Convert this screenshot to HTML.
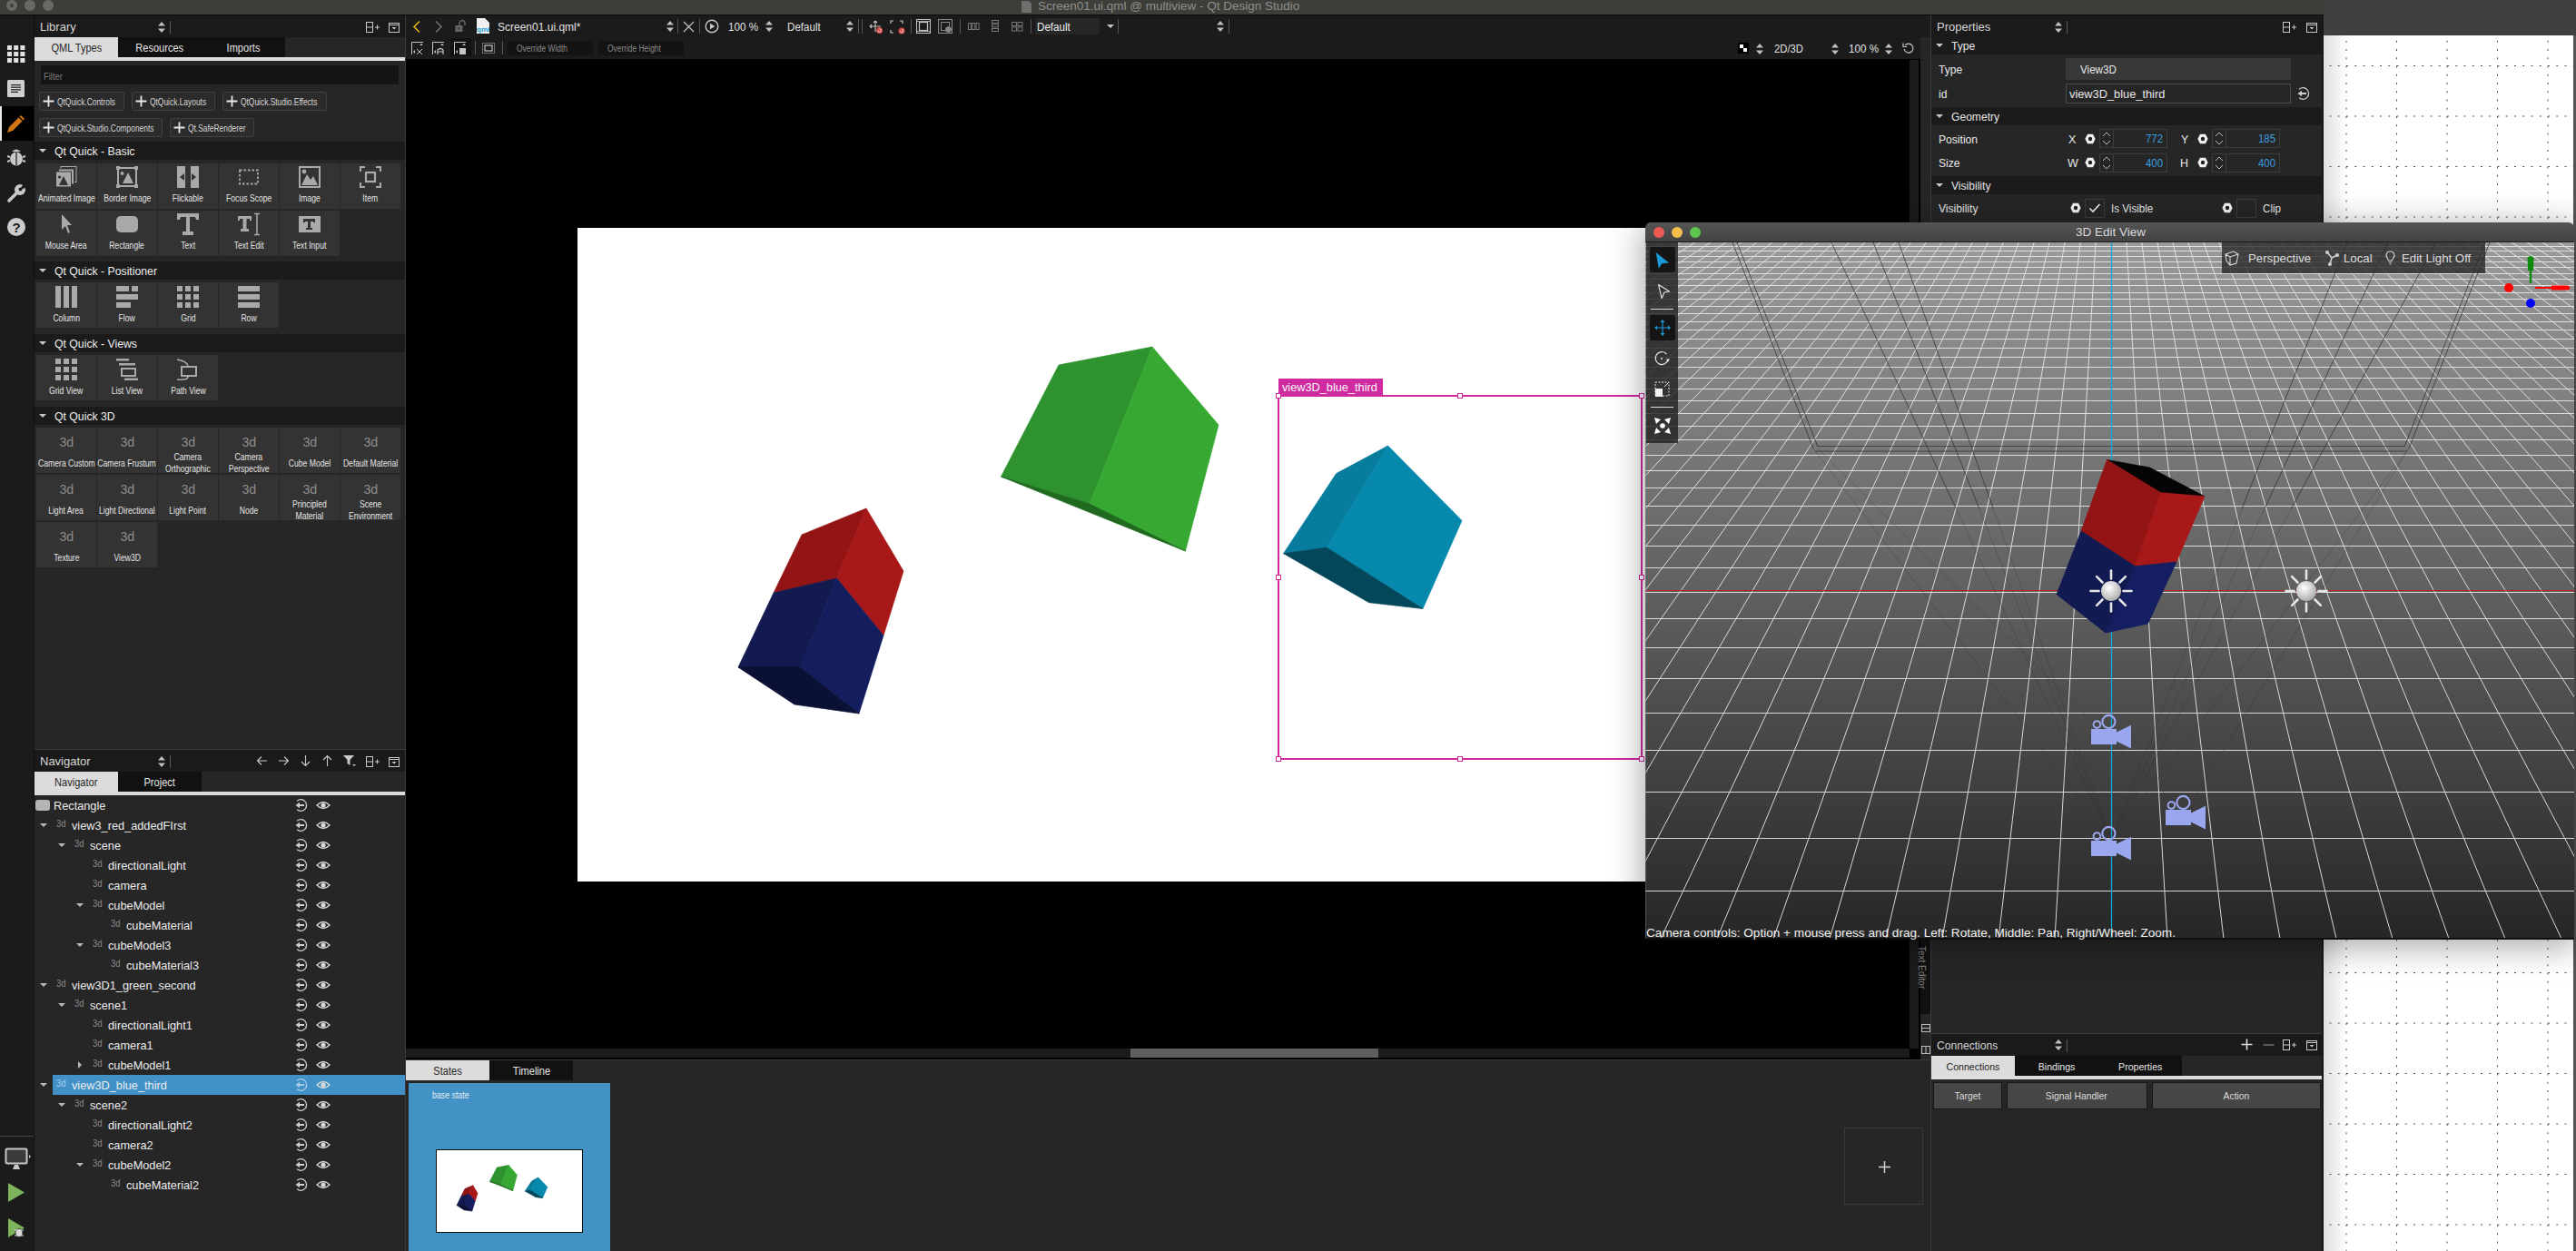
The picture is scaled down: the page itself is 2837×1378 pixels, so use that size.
<!DOCTYPE html>
<html><head><meta charset="utf-8">
<style>
html,body{margin:0;padding:0;width:2837px;height:1378px;overflow:hidden;background:#000;}
body{position:relative;font-family:"Liberation Sans",sans-serif;}
.a{position:absolute;}
.t{line-height:20px;height:20px;white-space:nowrap;}
svg{overflow:visible}
</style></head><body>

<div class="a" style="left:0px;top:0px;width:2559px;height:16px;background:#3d3e3a"></div>
<div class="a" style="left:0px;top:16px;width:2559px;height:1px;background:#0a0a0a"></div>
<div class="a" style="left:7px;top:0px;width:12px;height:12px;border-radius:6px;background:#686965"></div>
<div class="a" style="left:27px;top:0px;width:12px;height:12px;border-radius:6px;background:#686965"></div>
<div class="a" style="left:47px;top:0px;width:12px;height:12px;border-radius:6px;background:#686965"></div>
<div class="a" style="left:11px;top:4px;width:4px;height:4px;border-radius:2px;background:#3a3b38"></div>
<svg class="a" style="left:1125px;top:1px;" width="12" height="13" viewBox="0 0 12 13"><path d="M0 0H8L11 3V13H0Z" fill="#6e6f6c"/></svg>
<div class="a t" style="left:1143px;top:-3.23px;font-size:13.5px;color:#8e8f8b;font-weight:normal;">Screen01.ui.qml @ multiview - Qt Design Studio</div>
<div class="a" style="left:0px;top:17px;width:37px;height:1361px;background:#1b1b1b"></div>
<div class="a" style="left:37px;top:17px;width:1px;height:1361px;background:#111"></div>
<div class="a" style="left:0px;top:117px;width:37px;height:38px;background:#000"></div>
<div class="a" style="left:0px;top:117px;width:1.5px;height:38px;background:#e8e8e8"></div>
<svg class="a" style="left:8px;top:50px;" width="20" height="19" viewBox="0 0 20 19"><rect x="0.0" y="0" width="5" height="5" fill="#e2e2e2"/><rect x="0.0" y="7" width="5" height="5" fill="#e2e2e2"/><rect x="0.0" y="14" width="5" height="5" fill="#e2e2e2"/><rect x="7.2" y="0" width="5" height="5" fill="#e2e2e2"/><rect x="7.2" y="7" width="5" height="5" fill="#e2e2e2"/><rect x="7.2" y="14" width="5" height="5" fill="#e2e2e2"/><rect x="14.4" y="0" width="5" height="5" fill="#e2e2e2"/><rect x="14.4" y="7" width="5" height="5" fill="#e2e2e2"/><rect x="14.4" y="14" width="5" height="5" fill="#e2e2e2"/></svg>
<svg class="a" style="left:8px;top:88px;" width="20" height="20" viewBox="0 0 20 20"><rect x="0" y="0" width="19" height="19" rx="1.5" fill="#cfcfcf"/><rect x="4" y="5.0" width="11" height="1.2" fill="#222"/><rect x="4" y="7.6" width="11" height="1.2" fill="#222"/><rect x="4" y="10.2" width="11" height="1.2" fill="#222"/><rect x="4" y="12.8" width="8" height="1.2" fill="#222"/></svg>
<svg class="a" style="left:6px;top:125px;" width="24" height="24" viewBox="0 0 24 24"><path d="M2 21 L4 15 L17 2 L21 6 L8 19 Z" fill="#d07414"/><path d="M15 4 L19 8" stroke="#000" stroke-width="1.2"/></svg>
<svg class="a" style="left:7px;top:163px;" width="22" height="20" viewBox="0 0 22 20"><path d="M6 4 Q11 -1 16 4 Z" fill="#c8c8c8"/><ellipse cx="11" cy="12" rx="7" ry="7.5" fill="#c8c8c8"/><path d="M11 5 V19" stroke="#1b1b1b" stroke-width="1.2"/><path d="M1 9 L4 10 M1 15 L4 14 M21 9 L18 10 M21 15 L18 14" stroke="#c8c8c8" stroke-width="2"/></svg>
<svg class="a" style="left:7px;top:201px;" width="22" height="23" viewBox="0 0 22 23"><path d="M3 20 L13 10" stroke="#c8c8c8" stroke-width="3.6" stroke-linecap="round"/><circle cx="15" cy="8" r="6" fill="#c8c8c8"/><path d="M15 8 L19 1 L23 5 Z" fill="#1b1b1b"/><circle cx="15.5" cy="7.5" r="2" fill="#1b1b1b"/></svg>
<div class="a" style="left:8px;top:240px;width:20px;height:20px;border-radius:10px;background:#cbcbcb"></div>
<div class="a t" style="left:-982px;width:2000px;text-align:center;top:240.80px;font-size:15px;color:#1b1b1b;font-weight:bold;">?</div>
<div class="a" style="left:0px;top:1251px;width:37px;height:1px;background:#474747"></div>
<svg class="a" style="left:5px;top:1264px;" width="30" height="26" viewBox="0 0 30 26"><rect x="1.5" y="1.5" width="23" height="16" rx="1.5" fill="#3a3a3a" stroke="#c8c8c8" stroke-width="2"/><path d="M9 24 L17 24 L15 19 L11 19 Z" fill="#c8c8c8"/><path d="M27 8 L29 10 L27 12 Z" fill="#c8c8c8"/></svg>
<svg class="a" style="left:8px;top:1302px;" width="20" height="24" viewBox="0 0 20 24"><path d="M1 1 L19 11.5 L1 22 Z" fill="#7db35a"/></svg>
<svg class="a" style="left:8px;top:1341px;" width="22" height="24" viewBox="0 0 22 24"><path d="M1 1 L19 11.5 L1 22 Z" fill="#7db35a"/><ellipse cx="13" cy="17" rx="4" ry="4.5" fill="#d8d8d8" stroke="#1b1b1b" stroke-width="0.8"/><path d="M8 14 L18 14 M8 20 L18 20" stroke="#d8d8d8" stroke-width="1.2"/></svg>
<div class="a" style="left:2559px;top:0px;width:278px;height:39px;background:#404040"></div>
<div class="a" style="left:2559px;top:39px;width:278px;height:1339px;background:#fff"></div>
<div class="a" style="left:2834px;top:39px;width:3px;height:1339px;background:#555"></div>
<svg class="a" style="left:2559px;top:39px;" width="275" height="1339" viewBox="0 0 275 1339"><line x1="25.0" y1="0" x2="25.0" y2="1339" stroke="#505050" stroke-width="1" stroke-dasharray="2 7.25" stroke-dashoffset="3.5"/><line x1="80.5" y1="0" x2="80.5" y2="1339" stroke="#505050" stroke-width="1" stroke-dasharray="2 7.25" stroke-dashoffset="3.5"/><line x1="136.0" y1="0" x2="136.0" y2="1339" stroke="#505050" stroke-width="1" stroke-dasharray="2 7.25" stroke-dashoffset="3.5"/><line x1="191.5" y1="0" x2="191.5" y2="1339" stroke="#505050" stroke-width="1" stroke-dasharray="2 7.25" stroke-dashoffset="3.5"/><line x1="247.0" y1="0" x2="247.0" y2="1339" stroke="#505050" stroke-width="1" stroke-dasharray="2 7.25" stroke-dashoffset="3.5"/><line x1="0" y1="33.5" x2="275" y2="33.5" stroke="#505050" stroke-width="1" stroke-dasharray="2 7.25" stroke-dashoffset="2.75"/><line x1="0" y1="89.0" x2="275" y2="89.0" stroke="#505050" stroke-width="1" stroke-dasharray="2 7.25" stroke-dashoffset="2.75"/><line x1="0" y1="144.5" x2="275" y2="144.5" stroke="#505050" stroke-width="1" stroke-dasharray="2 7.25" stroke-dashoffset="2.75"/><line x1="0" y1="200.0" x2="275" y2="200.0" stroke="#505050" stroke-width="1" stroke-dasharray="2 7.25" stroke-dashoffset="2.75"/><line x1="0" y1="255.5" x2="275" y2="255.5" stroke="#505050" stroke-width="1" stroke-dasharray="2 7.25" stroke-dashoffset="2.75"/><line x1="0" y1="311.0" x2="275" y2="311.0" stroke="#505050" stroke-width="1" stroke-dasharray="2 7.25" stroke-dashoffset="2.75"/><line x1="0" y1="366.5" x2="275" y2="366.5" stroke="#505050" stroke-width="1" stroke-dasharray="2 7.25" stroke-dashoffset="2.75"/><line x1="0" y1="422.0" x2="275" y2="422.0" stroke="#505050" stroke-width="1" stroke-dasharray="2 7.25" stroke-dashoffset="2.75"/><line x1="0" y1="477.5" x2="275" y2="477.5" stroke="#505050" stroke-width="1" stroke-dasharray="2 7.25" stroke-dashoffset="2.75"/><line x1="0" y1="533.0" x2="275" y2="533.0" stroke="#505050" stroke-width="1" stroke-dasharray="2 7.25" stroke-dashoffset="2.75"/><line x1="0" y1="588.5" x2="275" y2="588.5" stroke="#505050" stroke-width="1" stroke-dasharray="2 7.25" stroke-dashoffset="2.75"/><line x1="0" y1="644.0" x2="275" y2="644.0" stroke="#505050" stroke-width="1" stroke-dasharray="2 7.25" stroke-dashoffset="2.75"/><line x1="0" y1="699.5" x2="275" y2="699.5" stroke="#505050" stroke-width="1" stroke-dasharray="2 7.25" stroke-dashoffset="2.75"/><line x1="0" y1="755.0" x2="275" y2="755.0" stroke="#505050" stroke-width="1" stroke-dasharray="2 7.25" stroke-dashoffset="2.75"/><line x1="0" y1="810.5" x2="275" y2="810.5" stroke="#505050" stroke-width="1" stroke-dasharray="2 7.25" stroke-dashoffset="2.75"/><line x1="0" y1="866.0" x2="275" y2="866.0" stroke="#505050" stroke-width="1" stroke-dasharray="2 7.25" stroke-dashoffset="2.75"/><line x1="0" y1="921.5" x2="275" y2="921.5" stroke="#505050" stroke-width="1" stroke-dasharray="2 7.25" stroke-dashoffset="2.75"/><line x1="0" y1="977.0" x2="275" y2="977.0" stroke="#505050" stroke-width="1" stroke-dasharray="2 7.25" stroke-dashoffset="2.75"/><line x1="0" y1="1032.5" x2="275" y2="1032.5" stroke="#505050" stroke-width="1" stroke-dasharray="2 7.25" stroke-dashoffset="2.75"/><line x1="0" y1="1088.0" x2="275" y2="1088.0" stroke="#505050" stroke-width="1" stroke-dasharray="2 7.25" stroke-dashoffset="2.75"/><line x1="0" y1="1143.5" x2="275" y2="1143.5" stroke="#505050" stroke-width="1" stroke-dasharray="2 7.25" stroke-dashoffset="2.75"/><line x1="0" y1="1199.0" x2="275" y2="1199.0" stroke="#505050" stroke-width="1" stroke-dasharray="2 7.25" stroke-dashoffset="2.75"/><line x1="0" y1="1254.5" x2="275" y2="1254.5" stroke="#505050" stroke-width="1" stroke-dasharray="2 7.25" stroke-dashoffset="2.75"/><line x1="0" y1="1310.0" x2="275" y2="1310.0" stroke="#505050" stroke-width="1" stroke-dasharray="2 7.25" stroke-dashoffset="2.75"/></svg>
<div class="a" style="left:2559px;top:39px;width:26px;height:1339px;background:linear-gradient(90deg,rgba(0,0,0,0.13),rgba(0,0,0,0))"></div>
<div class="a" style="left:38px;top:17px;width:408px;height:1361px;background:#262626"></div>
<div class="a" style="left:446px;top:17px;width:1px;height:1361px;background:#3b3b3b"></div>
<div class="a" style="left:38px;top:17px;width:408px;height:24px;background:#1a1a1a"></div>
<div class="a t" style="left:44px;top:20.26px;font-size:13px;color:#d6d6d6;font-weight:normal;">Library</div>
<svg class="a" style="left:173px;top:22.5px;" width="10" height="14" viewBox="0 0 10 14"><path d="M1 5.5 L5 1 L9 5.5 Z M1 8.5 L5 13 L9 8.5 Z" fill="#c0c0c0"/></svg>
<div class="a" style="left:187px;top:23px;width:1px;height:14px;background:#5a5a5a"></div>
<svg class="a" style="left:403px;top:24px;" width="16" height="12" viewBox="0 0 16 12"><rect x="0.5" y="0.5" width="7" height="11" fill="none" stroke="#c8c8c8" stroke-width="1"/><path d="M0.5 6 H7.5 M10 6 H15 M12.5 3.5 V8.5" stroke="#c8c8c8" stroke-width="1"/></svg>
<svg class="a" style="left:428px;top:25px;" width="12" height="11" viewBox="0 0 12 11"><rect x="0.5" y="0.5" width="11" height="10" fill="none" stroke="#c8c8c8" stroke-width="1"/><path d="M0.5 2.5 H11.5" stroke="#c8c8c8" stroke-width="1"/><path d="M3.5 5 L8.5 5 L6 7.5 Z" fill="#c8c8c8"/></svg>
<div class="a" style="left:38px;top:41px;width:408px;height:22px;background:#262626"></div>
<div class="a" style="left:38px;top:41px;width:92px;height:22px;background:#dcdcdc"></div>
<div class="a t" style="left:-916.0px;width:2000px;text-align:center;top:42.74px;font-size:12px;color:#262626;font-weight:normal;"><span style="display:inline-block;transform:scaleX(0.92);transform-origin:center center">QML Types</span></div>
<div class="a" style="left:130px;top:41px;width:92px;height:22px;background:#111111"></div>
<div class="a t" style="left:-824.0px;width:2000px;text-align:center;top:42.74px;font-size:12px;color:#e6e6e6;font-weight:normal;"><span style="display:inline-block;transform:scaleX(0.92);transform-origin:center center">Resources</span></div>
<div class="a" style="left:222px;top:41px;width:92px;height:22px;background:#111111"></div>
<div class="a t" style="left:-732.0px;width:2000px;text-align:center;top:42.74px;font-size:12px;color:#e6e6e6;font-weight:normal;"><span style="display:inline-block;transform:scaleX(0.92);transform-origin:center center">Imports</span></div>
<div class="a" style="left:38px;top:63px;width:408px;height:4px;background:#dcdcdc"></div>
<div class="a" style="left:45px;top:72px;width:394px;height:21px;background:#141414"></div>
<div class="a t" style="left:48px;top:73.71px;font-size:10.5px;color:#7a7a7a;font-weight:normal;"><span style="display:inline-block;transform:scaleX(0.9);transform-origin:left center">Filter</span></div>
<div class="a" style="left:43px;top:101px;width:94px;height:21px;background:#2b2b2b;border:1px solid #404040;box-sizing:border-box;border-radius:2px"></div>
<svg class="a" style="left:47px;top:105px;" width="13" height="13" viewBox="0 0 13 13"><path d="M6.5 0.5 V12.5 M0.5 6.5 H12.5" stroke="#e8e8e8" stroke-width="1.8"/></svg>
<div class="a t" style="left:63px;top:102.21px;font-size:10.5px;color:#d8d8d8;font-weight:normal;"><span style="display:inline-block;transform:scaleX(0.8);transform-origin:left center">QtQuick.Controls</span></div>
<div class="a" style="left:145px;top:101px;width:92px;height:21px;background:#2b2b2b;border:1px solid #404040;box-sizing:border-box;border-radius:2px"></div>
<svg class="a" style="left:149px;top:105px;" width="13" height="13" viewBox="0 0 13 13"><path d="M6.5 0.5 V12.5 M0.5 6.5 H12.5" stroke="#e8e8e8" stroke-width="1.8"/></svg>
<div class="a t" style="left:165px;top:102.21px;font-size:10.5px;color:#d8d8d8;font-weight:normal;"><span style="display:inline-block;transform:scaleX(0.8);transform-origin:left center">QtQuick.Layouts</span></div>
<div class="a" style="left:245px;top:101px;width:115px;height:21px;background:#2b2b2b;border:1px solid #404040;box-sizing:border-box;border-radius:2px"></div>
<svg class="a" style="left:249px;top:105px;" width="13" height="13" viewBox="0 0 13 13"><path d="M6.5 0.5 V12.5 M0.5 6.5 H12.5" stroke="#e8e8e8" stroke-width="1.8"/></svg>
<div class="a t" style="left:265px;top:102.21px;font-size:10.5px;color:#d8d8d8;font-weight:normal;"><span style="display:inline-block;transform:scaleX(0.8);transform-origin:left center">QtQuick.Studio.Effects</span></div>
<div class="a" style="left:43px;top:130px;width:136px;height:21px;background:#2b2b2b;border:1px solid #404040;box-sizing:border-box;border-radius:2px"></div>
<svg class="a" style="left:47px;top:134px;" width="13" height="13" viewBox="0 0 13 13"><path d="M6.5 0.5 V12.5 M0.5 6.5 H12.5" stroke="#e8e8e8" stroke-width="1.8"/></svg>
<div class="a t" style="left:63px;top:131.21px;font-size:10.5px;color:#d8d8d8;font-weight:normal;"><span style="display:inline-block;transform:scaleX(0.8);transform-origin:left center">QtQuick.Studio.Components</span></div>
<div class="a" style="left:187px;top:130px;width:93px;height:21px;background:#2b2b2b;border:1px solid #404040;box-sizing:border-box;border-radius:2px"></div>
<svg class="a" style="left:191px;top:134px;" width="13" height="13" viewBox="0 0 13 13"><path d="M6.5 0.5 V12.5 M0.5 6.5 H12.5" stroke="#e8e8e8" stroke-width="1.8"/></svg>
<div class="a t" style="left:207px;top:131.21px;font-size:10.5px;color:#d8d8d8;font-weight:normal;"><span style="display:inline-block;transform:scaleX(0.8);transform-origin:left center">Qt.SafeRenderer</span></div>
<div class="a" style="left:38px;top:156px;width:408px;height:20px;background:#1b1b1b"></div>
<svg class="a" style="left:42.5px;top:164.0px;" width="8" height="4" viewBox="0 0 8 4"><path d="M0 0 H8 L4 4 Z" fill="#c8c8c8"/></svg>
<div class="a t" style="left:60px;top:156.75px;font-size:12.5px;color:#eeeeee;font-weight:normal;"><span style="display:inline-block;transform:scaleX(0.98);transform-origin:left center">Qt Quick - Basic</span></div>
<div class="a" style="left:40px;top:179.5px;width:66px;height:50px;background:#333333"></div>
<svg class="a" style="left:61px;top:183.0px;" width="24" height="24" viewBox="0 0 24 24"><rect x="6" y="0.5" width="17" height="17" fill="none" stroke="#a9a9a9" stroke-width="1"/><rect x="3.5" y="3" width="17" height="17" fill="#a9a9a9" stroke="#333" stroke-width="1"/><rect x="0.5" y="6" width="17" height="17" fill="#a9a9a9" stroke="#333" stroke-width="1"/><path d="M4 21 L9 11 L14 21Z" fill="#333"/><circle cx="4.5" cy="12" r="1.6" fill="#333"/></svg>
<div class="a t" style="left:-927px;width:2000px;text-align:center;top:209.20px;font-size:10px;color:#e4e4e4;font-weight:normal;"><span style="display:inline-block;transform:scaleX(0.86);transform-origin:center center">Animated Image</span></div>
<div class="a" style="left:107px;top:179.5px;width:66px;height:50px;background:#333333"></div>
<svg class="a" style="left:128px;top:183.0px;" width="24" height="24" viewBox="0 0 24 24"><rect x="2" y="2" width="20" height="20" fill="none" stroke="#a9a9a9" stroke-width="2"/><rect x="0" y="0" width="4" height="4" fill="#a9a9a9"/><rect x="20" y="0" width="4" height="4" fill="#a9a9a9"/><rect x="0" y="20" width="4" height="4" fill="#a9a9a9"/><rect x="20" y="20" width="4" height="4" fill="#a9a9a9"/><path d="M7 19 L13 7 L19 19Z" fill="#a9a9a9"/><circle cx="6.5" cy="8" r="2" fill="#a9a9a9"/></svg>
<div class="a t" style="left:-860px;width:2000px;text-align:center;top:209.20px;font-size:10px;color:#e4e4e4;font-weight:normal;"><span style="display:inline-block;transform:scaleX(0.86);transform-origin:center center">Border Image</span></div>
<div class="a" style="left:174px;top:179.5px;width:66px;height:50px;background:#333333"></div>
<svg class="a" style="left:195px;top:183.0px;" width="24" height="24" viewBox="0 0 24 24"><rect x="0" y="0" width="9" height="24" fill="#a9a9a9"/><rect x="15" y="0" width="9" height="24" fill="#a9a9a9"/><path d="M8 8 L3 12 L8 16Z M16 8 L21 12 L16 16Z" fill="#333"/></svg>
<div class="a t" style="left:-793px;width:2000px;text-align:center;top:209.20px;font-size:10px;color:#e4e4e4;font-weight:normal;"><span style="display:inline-block;transform:scaleX(0.86);transform-origin:center center">Flickable</span></div>
<div class="a" style="left:241px;top:179.5px;width:66px;height:50px;background:#333333"></div>
<svg class="a" style="left:262px;top:183.0px;" width="24" height="24" viewBox="0 0 24 24"><rect x="2" y="4.5" width="20" height="15" fill="none" stroke="#a9a9a9" stroke-width="1.8" stroke-dasharray="2.5 2"/></svg>
<div class="a t" style="left:-726px;width:2000px;text-align:center;top:209.20px;font-size:10px;color:#e4e4e4;font-weight:normal;"><span style="display:inline-block;transform:scaleX(0.86);transform-origin:center center">Focus Scope</span></div>
<div class="a" style="left:308px;top:179.5px;width:66px;height:50px;background:#333333"></div>
<svg class="a" style="left:329px;top:183.0px;" width="24" height="24" viewBox="0 0 24 24"><rect x="1" y="1" width="22" height="22" fill="none" stroke="#a9a9a9" stroke-width="2"/><path d="M3 21 L9 9 L13 15 L16 11 L21 21Z" fill="#a9a9a9"/><circle cx="6" cy="6" r="2.4" fill="#a9a9a9"/></svg>
<div class="a t" style="left:-659px;width:2000px;text-align:center;top:209.20px;font-size:10px;color:#e4e4e4;font-weight:normal;"><span style="display:inline-block;transform:scaleX(0.86);transform-origin:center center">Image</span></div>
<div class="a" style="left:375px;top:179.5px;width:66px;height:50px;background:#333333"></div>
<svg class="a" style="left:396px;top:183.0px;" width="24" height="24" viewBox="0 0 24 24"><path d="M1 6 V1 H6 M18 1 H23 V6 M23 18 V23 H18 M6 23 H1 V18" fill="none" stroke="#a9a9a9" stroke-width="2"/><rect x="7" y="7" width="10" height="10" fill="none" stroke="#a9a9a9" stroke-width="2.2"/></svg>
<div class="a t" style="left:-592px;width:2000px;text-align:center;top:209.20px;font-size:10px;color:#e4e4e4;font-weight:normal;"><span style="display:inline-block;transform:scaleX(0.86);transform-origin:center center">Item</span></div>
<div class="a" style="left:40px;top:231.5px;width:66px;height:50px;background:#333333"></div>
<svg class="a" style="left:61px;top:235.0px;" width="24" height="24" viewBox="0 0 24 24"><path d="M2 0 L13 12 L8 12 L11 20 L9 21 L6 13 L2 17Z" fill="#a9a9a9" transform="translate(5,1)"/></svg>
<div class="a t" style="left:-927px;width:2000px;text-align:center;top:261.20px;font-size:10px;color:#e4e4e4;font-weight:normal;"><span style="display:inline-block;transform:scaleX(0.86);transform-origin:center center">Mouse Area</span></div>
<div class="a" style="left:107px;top:231.5px;width:66px;height:50px;background:#333333"></div>
<svg class="a" style="left:128px;top:235.0px;" width="24" height="24" viewBox="0 0 24 24"><rect x="0" y="3" width="24" height="18" rx="5" fill="#a9a9a9"/></svg>
<div class="a t" style="left:-860px;width:2000px;text-align:center;top:261.20px;font-size:10px;color:#e4e4e4;font-weight:normal;"><span style="display:inline-block;transform:scaleX(0.86);transform-origin:center center">Rectangle</span></div>
<div class="a" style="left:174px;top:231.5px;width:66px;height:50px;background:#333333"></div>
<svg class="a" style="left:195px;top:235.0px;" width="24" height="24" viewBox="0 0 24 24"><path d="M0 0 H24 V7 H21 L20 4 H14 V20 H18 V24 H6 V20 H10 V4 H4 L3 7 H0Z" fill="#a9a9a9"/></svg>
<div class="a t" style="left:-793px;width:2000px;text-align:center;top:261.20px;font-size:10px;color:#e4e4e4;font-weight:normal;"><span style="display:inline-block;transform:scaleX(0.86);transform-origin:center center">Text</span></div>
<div class="a" style="left:241px;top:231.5px;width:66px;height:50px;background:#333333"></div>
<svg class="a" style="left:262px;top:235.0px;" width="24" height="24" viewBox="0 0 24 24"><path d="M0 3 H15 V8 H13 V6 H9.5 V17 H12 V20 H3 V17 H5.5 V6 H2 V8 H0Z" fill="#a9a9a9"/><path d="M18 0.5 H24 M21 0.5 V23.5 M18 23.5 H24" stroke="#a9a9a9" stroke-width="1.5"/></svg>
<div class="a t" style="left:-726px;width:2000px;text-align:center;top:261.20px;font-size:10px;color:#e4e4e4;font-weight:normal;"><span style="display:inline-block;transform:scaleX(0.86);transform-origin:center center">Text Edit</span></div>
<div class="a" style="left:308px;top:231.5px;width:66px;height:50px;background:#333333"></div>
<svg class="a" style="left:329px;top:235.0px;" width="24" height="24" viewBox="0 0 24 24"><rect x="0" y="3" width="24" height="18" fill="#a9a9a9"/><path d="M5 6 H18 V10 H16 V9 H13 V16 H15 V18 H8 V16 H10 V9 H7 V10 H5Z" fill="#333"/></svg>
<div class="a t" style="left:-659px;width:2000px;text-align:center;top:261.20px;font-size:10px;color:#e4e4e4;font-weight:normal;"><span style="display:inline-block;transform:scaleX(0.86);transform-origin:center center">Text Input</span></div>
<div class="a" style="left:38px;top:288px;width:408px;height:20px;background:#1b1b1b"></div>
<svg class="a" style="left:42.5px;top:296.0px;" width="8" height="4" viewBox="0 0 8 4"><path d="M0 0 H8 L4 4 Z" fill="#c8c8c8"/></svg>
<div class="a t" style="left:60px;top:288.75px;font-size:12.5px;color:#eeeeee;font-weight:normal;"><span style="display:inline-block;transform:scaleX(0.98);transform-origin:left center">Qt Quick - Positioner</span></div>
<div class="a" style="left:40px;top:311px;width:66px;height:50px;background:#333333"></div>
<svg class="a" style="left:61px;top:314.5px;" width="24" height="24" viewBox="0 0 24 24"><rect x="0" y="0" width="6" height="24" fill="#a9a9a9"/><rect x="9" y="0" width="6" height="24" fill="#a9a9a9"/><rect x="18" y="0" width="6" height="24" fill="#a9a9a9"/></svg>
<div class="a t" style="left:-927px;width:2000px;text-align:center;top:340.70px;font-size:10px;color:#e4e4e4;font-weight:normal;"><span style="display:inline-block;transform:scaleX(0.86);transform-origin:center center">Column</span></div>
<div class="a" style="left:107px;top:311px;width:66px;height:50px;background:#333333"></div>
<svg class="a" style="left:128px;top:314.5px;" width="24" height="24" viewBox="0 0 24 24"><rect x="0" y="0" width="14" height="6" fill="#a9a9a9"/><rect x="17" y="0" width="7" height="6" fill="#a9a9a9"/><rect x="0" y="9" width="24" height="6" fill="#a9a9a9"/><rect x="0" y="18" width="16" height="6" fill="#a9a9a9"/></svg>
<div class="a t" style="left:-860px;width:2000px;text-align:center;top:340.70px;font-size:10px;color:#e4e4e4;font-weight:normal;"><span style="display:inline-block;transform:scaleX(0.86);transform-origin:center center">Flow</span></div>
<div class="a" style="left:174px;top:311px;width:66px;height:50px;background:#333333"></div>
<svg class="a" style="left:195px;top:314.5px;" width="24" height="24" viewBox="0 0 24 24"><rect x="0" y="0" width="6" height="6" fill="#a9a9a9"/><rect x="0" y="9" width="6" height="6" fill="#a9a9a9"/><rect x="0" y="18" width="6" height="6" fill="#a9a9a9"/><rect x="9" y="0" width="6" height="6" fill="#a9a9a9"/><rect x="9" y="9" width="6" height="6" fill="#a9a9a9"/><rect x="9" y="18" width="6" height="6" fill="#a9a9a9"/><rect x="18" y="0" width="6" height="6" fill="#a9a9a9"/><rect x="18" y="9" width="6" height="6" fill="#a9a9a9"/><rect x="18" y="18" width="6" height="6" fill="#a9a9a9"/></svg>
<div class="a t" style="left:-793px;width:2000px;text-align:center;top:340.70px;font-size:10px;color:#e4e4e4;font-weight:normal;"><span style="display:inline-block;transform:scaleX(0.86);transform-origin:center center">Grid</span></div>
<div class="a" style="left:241px;top:311px;width:66px;height:50px;background:#333333"></div>
<svg class="a" style="left:262px;top:314.5px;" width="24" height="24" viewBox="0 0 24 24"><rect x="0" y="0" width="24" height="6" fill="#a9a9a9"/><rect x="0" y="9" width="24" height="6" fill="#a9a9a9"/><rect x="0" y="18" width="24" height="6" fill="#a9a9a9"/></svg>
<div class="a t" style="left:-726px;width:2000px;text-align:center;top:340.70px;font-size:10px;color:#e4e4e4;font-weight:normal;"><span style="display:inline-block;transform:scaleX(0.86);transform-origin:center center">Row</span></div>
<div class="a" style="left:38px;top:368px;width:408px;height:20px;background:#1b1b1b"></div>
<svg class="a" style="left:42.5px;top:376.0px;" width="8" height="4" viewBox="0 0 8 4"><path d="M0 0 H8 L4 4 Z" fill="#c8c8c8"/></svg>
<div class="a t" style="left:60px;top:368.75px;font-size:12.5px;color:#eeeeee;font-weight:normal;"><span style="display:inline-block;transform:scaleX(0.98);transform-origin:left center">Qt Quick - Views</span></div>
<div class="a" style="left:40px;top:391px;width:66px;height:50px;background:#333333"></div>
<svg class="a" style="left:61px;top:394.5px;" width="24" height="24" viewBox="0 0 24 24"><rect x="0" y="0" width="6" height="6" fill="#a9a9a9"/><rect x="0" y="9" width="6" height="6" fill="#a9a9a9"/><rect x="0" y="18" width="6" height="6" fill="#a9a9a9"/><rect x="9" y="0" width="6" height="6" fill="#a9a9a9"/><rect x="9" y="9" width="6" height="6" fill="#a9a9a9"/><rect x="9" y="18" width="6" height="6" fill="#a9a9a9"/><rect x="18" y="0" width="6" height="6" fill="#a9a9a9"/><rect x="18" y="9" width="6" height="6" fill="#a9a9a9"/><rect x="18" y="18" width="6" height="6" fill="#a9a9a9"/></svg>
<div class="a t" style="left:-927px;width:2000px;text-align:center;top:420.70px;font-size:10px;color:#e4e4e4;font-weight:normal;"><span style="display:inline-block;transform:scaleX(0.86);transform-origin:center center">Grid View</span></div>
<div class="a" style="left:107px;top:391px;width:66px;height:50px;background:#333333"></div>
<svg class="a" style="left:128px;top:394.5px;" width="24" height="24" viewBox="0 0 24 24"><rect x="0" y="0" width="14" height="2.5" fill="#a9a9a9"/><rect x="3" y="5" width="18" height="2.5" fill="#a9a9a9"/><rect x="6" y="11" width="15" height="8" fill="none" stroke="#a9a9a9" stroke-width="2"/><rect x="9" y="21.5" width="15" height="2.5" fill="#a9a9a9"/></svg>
<div class="a t" style="left:-860px;width:2000px;text-align:center;top:420.70px;font-size:10px;color:#e4e4e4;font-weight:normal;"><span style="display:inline-block;transform:scaleX(0.86);transform-origin:center center">List View</span></div>
<div class="a" style="left:174px;top:391px;width:66px;height:50px;background:#333333"></div>
<svg class="a" style="left:195px;top:394.5px;" width="24" height="24" viewBox="0 0 24 24"><path d="M0 1 Q12 3 12 9 M12 20 Q12 24 0 23" fill="none" stroke="#a9a9a9" stroke-width="1.6"/><rect x="5" y="9" width="16" height="10" fill="none" stroke="#a9a9a9" stroke-width="2"/></svg>
<div class="a t" style="left:-793px;width:2000px;text-align:center;top:420.70px;font-size:10px;color:#e4e4e4;font-weight:normal;"><span style="display:inline-block;transform:scaleX(0.86);transform-origin:center center">Path View</span></div>
<div class="a" style="left:38px;top:448px;width:408px;height:20px;background:#1b1b1b"></div>
<svg class="a" style="left:42.5px;top:456.0px;" width="8" height="4" viewBox="0 0 8 4"><path d="M0 0 H8 L4 4 Z" fill="#c8c8c8"/></svg>
<div class="a t" style="left:60px;top:448.75px;font-size:12.5px;color:#eeeeee;font-weight:normal;"><span style="display:inline-block;transform:scaleX(0.98);transform-origin:left center">Qt Quick 3D</span></div>
<div class="a" style="left:40px;top:471px;width:66px;height:50px;background:#333333"></div>
<div class="a t" style="left:-927px;width:2000px;text-align:center;top:477.30px;font-size:15px;color:#8c8c8c;font-weight:normal;"><span style="display:inline-block;transform:scaleX(0.95);transform-origin:center center">3d</span></div>
<div class="a t" style="left:-927px;width:2000px;text-align:center;top:500.70px;font-size:10px;color:#e4e4e4;font-weight:normal;"><span style="display:inline-block;transform:scaleX(0.86);transform-origin:center center">Camera Custom</span></div>
<div class="a" style="left:107px;top:471px;width:66px;height:50px;background:#333333"></div>
<div class="a t" style="left:-860px;width:2000px;text-align:center;top:477.30px;font-size:15px;color:#8c8c8c;font-weight:normal;"><span style="display:inline-block;transform:scaleX(0.95);transform-origin:center center">3d</span></div>
<div class="a t" style="left:-860px;width:2000px;text-align:center;top:500.70px;font-size:10px;color:#e4e4e4;font-weight:normal;"><span style="display:inline-block;transform:scaleX(0.86);transform-origin:center center">Camera Frustum</span></div>
<div class="a" style="left:174px;top:471px;width:66px;height:50px;background:#333333"></div>
<div class="a t" style="left:-793px;width:2000px;text-align:center;top:477.30px;font-size:15px;color:#8c8c8c;font-weight:normal;"><span style="display:inline-block;transform:scaleX(0.95);transform-origin:center center">3d</span></div>
<div class="a t" style="left:-793px;width:2000px;text-align:center;top:493.70px;font-size:10px;color:#e4e4e4;font-weight:normal;"><span style="display:inline-block;transform:scaleX(0.86);transform-origin:center center">Camera</span></div>
<div class="a t" style="left:-793px;width:2000px;text-align:center;top:507.20px;font-size:10px;color:#e4e4e4;font-weight:normal;"><span style="display:inline-block;transform:scaleX(0.86);transform-origin:center center">Orthographic</span></div>
<div class="a" style="left:241px;top:471px;width:66px;height:50px;background:#333333"></div>
<div class="a t" style="left:-726px;width:2000px;text-align:center;top:477.30px;font-size:15px;color:#8c8c8c;font-weight:normal;"><span style="display:inline-block;transform:scaleX(0.95);transform-origin:center center">3d</span></div>
<div class="a t" style="left:-726px;width:2000px;text-align:center;top:493.70px;font-size:10px;color:#e4e4e4;font-weight:normal;"><span style="display:inline-block;transform:scaleX(0.86);transform-origin:center center">Camera</span></div>
<div class="a t" style="left:-726px;width:2000px;text-align:center;top:507.20px;font-size:10px;color:#e4e4e4;font-weight:normal;"><span style="display:inline-block;transform:scaleX(0.86);transform-origin:center center">Perspective</span></div>
<div class="a" style="left:308px;top:471px;width:66px;height:50px;background:#333333"></div>
<div class="a t" style="left:-659px;width:2000px;text-align:center;top:477.30px;font-size:15px;color:#8c8c8c;font-weight:normal;"><span style="display:inline-block;transform:scaleX(0.95);transform-origin:center center">3d</span></div>
<div class="a t" style="left:-659px;width:2000px;text-align:center;top:500.70px;font-size:10px;color:#e4e4e4;font-weight:normal;"><span style="display:inline-block;transform:scaleX(0.86);transform-origin:center center">Cube Model</span></div>
<div class="a" style="left:375px;top:471px;width:66px;height:50px;background:#333333"></div>
<div class="a t" style="left:-592px;width:2000px;text-align:center;top:477.30px;font-size:15px;color:#8c8c8c;font-weight:normal;"><span style="display:inline-block;transform:scaleX(0.95);transform-origin:center center">3d</span></div>
<div class="a t" style="left:-592px;width:2000px;text-align:center;top:500.70px;font-size:10px;color:#e4e4e4;font-weight:normal;"><span style="display:inline-block;transform:scaleX(0.86);transform-origin:center center">Default Material</span></div>
<div class="a" style="left:40px;top:523px;width:66px;height:50px;background:#333333"></div>
<div class="a t" style="left:-927px;width:2000px;text-align:center;top:529.30px;font-size:15px;color:#8c8c8c;font-weight:normal;"><span style="display:inline-block;transform:scaleX(0.95);transform-origin:center center">3d</span></div>
<div class="a t" style="left:-927px;width:2000px;text-align:center;top:552.70px;font-size:10px;color:#e4e4e4;font-weight:normal;"><span style="display:inline-block;transform:scaleX(0.86);transform-origin:center center">Light Area</span></div>
<div class="a" style="left:107px;top:523px;width:66px;height:50px;background:#333333"></div>
<div class="a t" style="left:-860px;width:2000px;text-align:center;top:529.30px;font-size:15px;color:#8c8c8c;font-weight:normal;"><span style="display:inline-block;transform:scaleX(0.95);transform-origin:center center">3d</span></div>
<div class="a t" style="left:-860px;width:2000px;text-align:center;top:552.70px;font-size:10px;color:#e4e4e4;font-weight:normal;"><span style="display:inline-block;transform:scaleX(0.86);transform-origin:center center">Light Directional</span></div>
<div class="a" style="left:174px;top:523px;width:66px;height:50px;background:#333333"></div>
<div class="a t" style="left:-793px;width:2000px;text-align:center;top:529.30px;font-size:15px;color:#8c8c8c;font-weight:normal;"><span style="display:inline-block;transform:scaleX(0.95);transform-origin:center center">3d</span></div>
<div class="a t" style="left:-793px;width:2000px;text-align:center;top:552.70px;font-size:10px;color:#e4e4e4;font-weight:normal;"><span style="display:inline-block;transform:scaleX(0.86);transform-origin:center center">Light Point</span></div>
<div class="a" style="left:241px;top:523px;width:66px;height:50px;background:#333333"></div>
<div class="a t" style="left:-726px;width:2000px;text-align:center;top:529.30px;font-size:15px;color:#8c8c8c;font-weight:normal;"><span style="display:inline-block;transform:scaleX(0.95);transform-origin:center center">3d</span></div>
<div class="a t" style="left:-726px;width:2000px;text-align:center;top:552.70px;font-size:10px;color:#e4e4e4;font-weight:normal;"><span style="display:inline-block;transform:scaleX(0.86);transform-origin:center center">Node</span></div>
<div class="a" style="left:308px;top:523px;width:66px;height:50px;background:#333333"></div>
<div class="a t" style="left:-659px;width:2000px;text-align:center;top:529.30px;font-size:15px;color:#8c8c8c;font-weight:normal;"><span style="display:inline-block;transform:scaleX(0.95);transform-origin:center center">3d</span></div>
<div class="a t" style="left:-659px;width:2000px;text-align:center;top:545.70px;font-size:10px;color:#e4e4e4;font-weight:normal;"><span style="display:inline-block;transform:scaleX(0.86);transform-origin:center center">Principled</span></div>
<div class="a t" style="left:-659px;width:2000px;text-align:center;top:559.20px;font-size:10px;color:#e4e4e4;font-weight:normal;"><span style="display:inline-block;transform:scaleX(0.86);transform-origin:center center">Material</span></div>
<div class="a" style="left:375px;top:523px;width:66px;height:50px;background:#333333"></div>
<div class="a t" style="left:-592px;width:2000px;text-align:center;top:529.30px;font-size:15px;color:#8c8c8c;font-weight:normal;"><span style="display:inline-block;transform:scaleX(0.95);transform-origin:center center">3d</span></div>
<div class="a t" style="left:-592px;width:2000px;text-align:center;top:545.70px;font-size:10px;color:#e4e4e4;font-weight:normal;"><span style="display:inline-block;transform:scaleX(0.86);transform-origin:center center">Scene</span></div>
<div class="a t" style="left:-592px;width:2000px;text-align:center;top:559.20px;font-size:10px;color:#e4e4e4;font-weight:normal;"><span style="display:inline-block;transform:scaleX(0.86);transform-origin:center center">Environment</span></div>
<div class="a" style="left:40px;top:575px;width:66px;height:50px;background:#333333"></div>
<div class="a t" style="left:-927px;width:2000px;text-align:center;top:581.30px;font-size:15px;color:#8c8c8c;font-weight:normal;"><span style="display:inline-block;transform:scaleX(0.95);transform-origin:center center">3d</span></div>
<div class="a t" style="left:-927px;width:2000px;text-align:center;top:604.70px;font-size:10px;color:#e4e4e4;font-weight:normal;"><span style="display:inline-block;transform:scaleX(0.86);transform-origin:center center">Texture</span></div>
<div class="a" style="left:107px;top:575px;width:66px;height:50px;background:#333333"></div>
<div class="a t" style="left:-860px;width:2000px;text-align:center;top:581.30px;font-size:15px;color:#8c8c8c;font-weight:normal;"><span style="display:inline-block;transform:scaleX(0.95);transform-origin:center center">3d</span></div>
<div class="a t" style="left:-860px;width:2000px;text-align:center;top:604.70px;font-size:10px;color:#e4e4e4;font-weight:normal;"><span style="display:inline-block;transform:scaleX(0.86);transform-origin:center center">View3D</span></div>
<div class="a" style="left:38px;top:825px;width:408px;height:1px;background:#3d3d3d"></div>
<div class="a" style="left:38px;top:826px;width:408px;height:24px;background:#1a1a1a"></div>
<div class="a t" style="left:44px;top:829.26px;font-size:13px;color:#d6d6d6;font-weight:normal;">Navigator</div>
<svg class="a" style="left:173px;top:831.5px;" width="10" height="14" viewBox="0 0 10 14"><path d="M1 5.5 L5 1 L9 5.5 Z M1 8.5 L5 13 L9 8.5 Z" fill="#c0c0c0"/></svg>
<div class="a" style="left:187px;top:832px;width:1px;height:14px;background:#5a5a5a"></div>
<svg class="a" style="left:282px;top:832px;" width="13" height="12" viewBox="0 0 13 12"><path d="M12 6 H1.5 M6 1.5 L1.5 6 L6 10.5" fill="none" stroke="#c8c8c8" stroke-width="1.1"/></svg>
<svg class="a" style="left:306px;top:832px;" width="13" height="12" viewBox="0 0 13 12"><path d="M1 6 H11.5 M7 1.5 L11.5 6 L7 10.5" fill="none" stroke="#c8c8c8" stroke-width="1.1"/></svg>
<svg class="a" style="left:330px;top:831px;" width="13" height="14" viewBox="0 0 13 14"><path d="M6.5 1 V12.5 M2 8 L6.5 12.5 L11 8" fill="none" stroke="#c8c8c8" stroke-width="1.1"/></svg>
<svg class="a" style="left:354px;top:831px;" width="13" height="14" viewBox="0 0 13 14"><path d="M6.5 13 V1.5 M2 6 L6.5 1.5 L11 6" fill="none" stroke="#c8c8c8" stroke-width="1.1"/></svg>
<svg class="a" style="left:378px;top:832px;" width="15" height="14" viewBox="0 0 15 14"><path d="M0 0 H12 L7.5 5 V11 L4.5 9 V5 Z" fill="#c8c8c8"/><path d="M10 10 H14 L12 12 Z" fill="#c8c8c8"/></svg>
<svg class="a" style="left:403px;top:833px;" width="16" height="12" viewBox="0 0 16 12"><rect x="0.5" y="0.5" width="7" height="11" fill="none" stroke="#c8c8c8" stroke-width="1"/><path d="M0.5 6 H7.5 M10 6 H15 M12.5 3.5 V8.5" stroke="#c8c8c8" stroke-width="1"/></svg>
<svg class="a" style="left:428px;top:834px;" width="12" height="11" viewBox="0 0 12 11"><rect x="0.5" y="0.5" width="11" height="10" fill="none" stroke="#c8c8c8" stroke-width="1"/><path d="M0.5 2.5 H11.5" stroke="#c8c8c8" stroke-width="1"/><path d="M3.5 5 L8.5 5 L6 7.5 Z" fill="#c8c8c8"/></svg>
<div class="a" style="left:38px;top:850px;width:408px;height:22px;background:#262626"></div>
<div class="a" style="left:38px;top:850px;width:92px;height:22px;background:#dcdcdc"></div>
<div class="a t" style="left:-916.0px;width:2000px;text-align:center;top:851.74px;font-size:12px;color:#262626;font-weight:normal;"><span style="display:inline-block;transform:scaleX(0.92);transform-origin:center center">Navigator</span></div>
<div class="a" style="left:130px;top:850px;width:92px;height:22px;background:#111111"></div>
<div class="a t" style="left:-824.0px;width:2000px;text-align:center;top:851.74px;font-size:12px;color:#e6e6e6;font-weight:normal;"><span style="display:inline-block;transform:scaleX(0.92);transform-origin:center center">Project</span></div>
<div class="a" style="left:38px;top:872px;width:408px;height:4px;background:#dcdcdc"></div>
<div class="a" style="left:39px;top:880.5px;width:16px;height:12px;background:#b4b4b4;border-radius:3px"></div>
<div class="a t" style="left:59px;top:877.76px;font-size:13px;color:#ececec;font-weight:normal;"><span style="display:inline-block;transform:scaleX(0.98);transform-origin:left center">Rectangle</span></div>
<svg class="a" style="left:322.5px;top:878.5px;" width="16" height="16" viewBox="0 0 16 16"><path d="M4.2 3.2 A6.3 6.3 0 1 1 4.2 12.8" fill="none" stroke="#d0d0d0" stroke-width="1.3"/><path d="M2.5 8 L7 4.8 V6.9 H12 V9.1 H7 V11.2 Z" fill="#d0d0d0"/></svg>
<svg class="a" style="left:348px;top:881.5px;" width="16" height="10" viewBox="0 0 16 10"><path d="M1 5 Q8 -2 15 5 Q8 12 1 5 Z" fill="none" stroke="#d8d8d8" stroke-width="1.3"/><circle cx="8" cy="5" r="2.6" fill="#d8d8d8"/></svg>
<div class="a t" style="left:62px;top:897.70px;font-size:10px;color:#8a8a8a;font-weight:normal;"><span style="display:inline-block;transform:scaleX(0.95);transform-origin:left center">3d</span></div>
<svg class="a" style="left:44px;top:907.0px;" width="8" height="4" viewBox="0 0 8 4"><path d="M0 0 H8 L4 4 Z" fill="#b8b8b8"/></svg>
<div class="a t" style="left:79px;top:899.76px;font-size:13px;color:#ececec;font-weight:normal;"><span style="display:inline-block;transform:scaleX(0.98);transform-origin:left center">view3_red_addedFIrst</span></div>
<svg class="a" style="left:322.5px;top:900.5px;" width="16" height="16" viewBox="0 0 16 16"><path d="M4.2 3.2 A6.3 6.3 0 1 1 4.2 12.8" fill="none" stroke="#d0d0d0" stroke-width="1.3"/><path d="M2.5 8 L7 4.8 V6.9 H12 V9.1 H7 V11.2 Z" fill="#d0d0d0"/></svg>
<svg class="a" style="left:348px;top:903.5px;" width="16" height="10" viewBox="0 0 16 10"><path d="M1 5 Q8 -2 15 5 Q8 12 1 5 Z" fill="none" stroke="#d8d8d8" stroke-width="1.3"/><circle cx="8" cy="5" r="2.6" fill="#d8d8d8"/></svg>
<div class="a t" style="left:82px;top:919.70px;font-size:10px;color:#8a8a8a;font-weight:normal;"><span style="display:inline-block;transform:scaleX(0.95);transform-origin:left center">3d</span></div>
<svg class="a" style="left:64px;top:929.0px;" width="8" height="4" viewBox="0 0 8 4"><path d="M0 0 H8 L4 4 Z" fill="#b8b8b8"/></svg>
<div class="a t" style="left:99px;top:921.76px;font-size:13px;color:#ececec;font-weight:normal;"><span style="display:inline-block;transform:scaleX(0.98);transform-origin:left center">scene</span></div>
<svg class="a" style="left:322.5px;top:922.5px;" width="16" height="16" viewBox="0 0 16 16"><path d="M4.2 3.2 A6.3 6.3 0 1 1 4.2 12.8" fill="none" stroke="#d0d0d0" stroke-width="1.3"/><path d="M2.5 8 L7 4.8 V6.9 H12 V9.1 H7 V11.2 Z" fill="#d0d0d0"/></svg>
<svg class="a" style="left:348px;top:925.5px;" width="16" height="10" viewBox="0 0 16 10"><path d="M1 5 Q8 -2 15 5 Q8 12 1 5 Z" fill="none" stroke="#d8d8d8" stroke-width="1.3"/><circle cx="8" cy="5" r="2.6" fill="#d8d8d8"/></svg>
<div class="a t" style="left:102px;top:941.70px;font-size:10px;color:#8a8a8a;font-weight:normal;"><span style="display:inline-block;transform:scaleX(0.95);transform-origin:left center">3d</span></div>
<div class="a t" style="left:119px;top:943.76px;font-size:13px;color:#ececec;font-weight:normal;"><span style="display:inline-block;transform:scaleX(0.98);transform-origin:left center">directionalLight</span></div>
<svg class="a" style="left:322.5px;top:944.5px;" width="16" height="16" viewBox="0 0 16 16"><path d="M4.2 3.2 A6.3 6.3 0 1 1 4.2 12.8" fill="none" stroke="#d0d0d0" stroke-width="1.3"/><path d="M2.5 8 L7 4.8 V6.9 H12 V9.1 H7 V11.2 Z" fill="#d0d0d0"/></svg>
<svg class="a" style="left:348px;top:947.5px;" width="16" height="10" viewBox="0 0 16 10"><path d="M1 5 Q8 -2 15 5 Q8 12 1 5 Z" fill="none" stroke="#d8d8d8" stroke-width="1.3"/><circle cx="8" cy="5" r="2.6" fill="#d8d8d8"/></svg>
<div class="a t" style="left:102px;top:963.70px;font-size:10px;color:#8a8a8a;font-weight:normal;"><span style="display:inline-block;transform:scaleX(0.95);transform-origin:left center">3d</span></div>
<div class="a t" style="left:119px;top:965.76px;font-size:13px;color:#ececec;font-weight:normal;"><span style="display:inline-block;transform:scaleX(0.98);transform-origin:left center">camera</span></div>
<svg class="a" style="left:322.5px;top:966.5px;" width="16" height="16" viewBox="0 0 16 16"><path d="M4.2 3.2 A6.3 6.3 0 1 1 4.2 12.8" fill="none" stroke="#d0d0d0" stroke-width="1.3"/><path d="M2.5 8 L7 4.8 V6.9 H12 V9.1 H7 V11.2 Z" fill="#d0d0d0"/></svg>
<svg class="a" style="left:348px;top:969.5px;" width="16" height="10" viewBox="0 0 16 10"><path d="M1 5 Q8 -2 15 5 Q8 12 1 5 Z" fill="none" stroke="#d8d8d8" stroke-width="1.3"/><circle cx="8" cy="5" r="2.6" fill="#d8d8d8"/></svg>
<div class="a t" style="left:102px;top:985.70px;font-size:10px;color:#8a8a8a;font-weight:normal;"><span style="display:inline-block;transform:scaleX(0.95);transform-origin:left center">3d</span></div>
<svg class="a" style="left:84px;top:995.0px;" width="8" height="4" viewBox="0 0 8 4"><path d="M0 0 H8 L4 4 Z" fill="#b8b8b8"/></svg>
<div class="a t" style="left:119px;top:987.76px;font-size:13px;color:#ececec;font-weight:normal;"><span style="display:inline-block;transform:scaleX(0.98);transform-origin:left center">cubeModel</span></div>
<svg class="a" style="left:322.5px;top:988.5px;" width="16" height="16" viewBox="0 0 16 16"><path d="M4.2 3.2 A6.3 6.3 0 1 1 4.2 12.8" fill="none" stroke="#d0d0d0" stroke-width="1.3"/><path d="M2.5 8 L7 4.8 V6.9 H12 V9.1 H7 V11.2 Z" fill="#d0d0d0"/></svg>
<svg class="a" style="left:348px;top:991.5px;" width="16" height="10" viewBox="0 0 16 10"><path d="M1 5 Q8 -2 15 5 Q8 12 1 5 Z" fill="none" stroke="#d8d8d8" stroke-width="1.3"/><circle cx="8" cy="5" r="2.6" fill="#d8d8d8"/></svg>
<div class="a t" style="left:122px;top:1007.70px;font-size:10px;color:#8a8a8a;font-weight:normal;"><span style="display:inline-block;transform:scaleX(0.95);transform-origin:left center">3d</span></div>
<div class="a t" style="left:139px;top:1009.76px;font-size:13px;color:#ececec;font-weight:normal;"><span style="display:inline-block;transform:scaleX(0.98);transform-origin:left center">cubeMaterial</span></div>
<svg class="a" style="left:322.5px;top:1010.5px;" width="16" height="16" viewBox="0 0 16 16"><path d="M4.2 3.2 A6.3 6.3 0 1 1 4.2 12.8" fill="none" stroke="#d0d0d0" stroke-width="1.3"/><path d="M2.5 8 L7 4.8 V6.9 H12 V9.1 H7 V11.2 Z" fill="#d0d0d0"/></svg>
<svg class="a" style="left:348px;top:1013.5px;" width="16" height="10" viewBox="0 0 16 10"><path d="M1 5 Q8 -2 15 5 Q8 12 1 5 Z" fill="none" stroke="#d8d8d8" stroke-width="1.3"/><circle cx="8" cy="5" r="2.6" fill="#d8d8d8"/></svg>
<div class="a t" style="left:102px;top:1029.70px;font-size:10px;color:#8a8a8a;font-weight:normal;"><span style="display:inline-block;transform:scaleX(0.95);transform-origin:left center">3d</span></div>
<svg class="a" style="left:84px;top:1039.0px;" width="8" height="4" viewBox="0 0 8 4"><path d="M0 0 H8 L4 4 Z" fill="#b8b8b8"/></svg>
<div class="a t" style="left:119px;top:1031.76px;font-size:13px;color:#ececec;font-weight:normal;"><span style="display:inline-block;transform:scaleX(0.98);transform-origin:left center">cubeModel3</span></div>
<svg class="a" style="left:322.5px;top:1032.5px;" width="16" height="16" viewBox="0 0 16 16"><path d="M4.2 3.2 A6.3 6.3 0 1 1 4.2 12.8" fill="none" stroke="#d0d0d0" stroke-width="1.3"/><path d="M2.5 8 L7 4.8 V6.9 H12 V9.1 H7 V11.2 Z" fill="#d0d0d0"/></svg>
<svg class="a" style="left:348px;top:1035.5px;" width="16" height="10" viewBox="0 0 16 10"><path d="M1 5 Q8 -2 15 5 Q8 12 1 5 Z" fill="none" stroke="#d8d8d8" stroke-width="1.3"/><circle cx="8" cy="5" r="2.6" fill="#d8d8d8"/></svg>
<div class="a t" style="left:122px;top:1051.70px;font-size:10px;color:#8a8a8a;font-weight:normal;"><span style="display:inline-block;transform:scaleX(0.95);transform-origin:left center">3d</span></div>
<div class="a t" style="left:139px;top:1053.76px;font-size:13px;color:#ececec;font-weight:normal;"><span style="display:inline-block;transform:scaleX(0.98);transform-origin:left center">cubeMaterial3</span></div>
<svg class="a" style="left:322.5px;top:1054.5px;" width="16" height="16" viewBox="0 0 16 16"><path d="M4.2 3.2 A6.3 6.3 0 1 1 4.2 12.8" fill="none" stroke="#d0d0d0" stroke-width="1.3"/><path d="M2.5 8 L7 4.8 V6.9 H12 V9.1 H7 V11.2 Z" fill="#d0d0d0"/></svg>
<svg class="a" style="left:348px;top:1057.5px;" width="16" height="10" viewBox="0 0 16 10"><path d="M1 5 Q8 -2 15 5 Q8 12 1 5 Z" fill="none" stroke="#d8d8d8" stroke-width="1.3"/><circle cx="8" cy="5" r="2.6" fill="#d8d8d8"/></svg>
<div class="a t" style="left:62px;top:1073.70px;font-size:10px;color:#8a8a8a;font-weight:normal;"><span style="display:inline-block;transform:scaleX(0.95);transform-origin:left center">3d</span></div>
<svg class="a" style="left:44px;top:1083.0px;" width="8" height="4" viewBox="0 0 8 4"><path d="M0 0 H8 L4 4 Z" fill="#b8b8b8"/></svg>
<div class="a t" style="left:79px;top:1075.76px;font-size:13px;color:#ececec;font-weight:normal;"><span style="display:inline-block;transform:scaleX(0.98);transform-origin:left center">view3D1_green_second</span></div>
<svg class="a" style="left:322.5px;top:1076.5px;" width="16" height="16" viewBox="0 0 16 16"><path d="M4.2 3.2 A6.3 6.3 0 1 1 4.2 12.8" fill="none" stroke="#d0d0d0" stroke-width="1.3"/><path d="M2.5 8 L7 4.8 V6.9 H12 V9.1 H7 V11.2 Z" fill="#d0d0d0"/></svg>
<svg class="a" style="left:348px;top:1079.5px;" width="16" height="10" viewBox="0 0 16 10"><path d="M1 5 Q8 -2 15 5 Q8 12 1 5 Z" fill="none" stroke="#d8d8d8" stroke-width="1.3"/><circle cx="8" cy="5" r="2.6" fill="#d8d8d8"/></svg>
<div class="a t" style="left:82px;top:1095.70px;font-size:10px;color:#8a8a8a;font-weight:normal;"><span style="display:inline-block;transform:scaleX(0.95);transform-origin:left center">3d</span></div>
<svg class="a" style="left:64px;top:1105.0px;" width="8" height="4" viewBox="0 0 8 4"><path d="M0 0 H8 L4 4 Z" fill="#b8b8b8"/></svg>
<div class="a t" style="left:99px;top:1097.76px;font-size:13px;color:#ececec;font-weight:normal;"><span style="display:inline-block;transform:scaleX(0.98);transform-origin:left center">scene1</span></div>
<svg class="a" style="left:322.5px;top:1098.5px;" width="16" height="16" viewBox="0 0 16 16"><path d="M4.2 3.2 A6.3 6.3 0 1 1 4.2 12.8" fill="none" stroke="#d0d0d0" stroke-width="1.3"/><path d="M2.5 8 L7 4.8 V6.9 H12 V9.1 H7 V11.2 Z" fill="#d0d0d0"/></svg>
<svg class="a" style="left:348px;top:1101.5px;" width="16" height="10" viewBox="0 0 16 10"><path d="M1 5 Q8 -2 15 5 Q8 12 1 5 Z" fill="none" stroke="#d8d8d8" stroke-width="1.3"/><circle cx="8" cy="5" r="2.6" fill="#d8d8d8"/></svg>
<div class="a t" style="left:102px;top:1117.70px;font-size:10px;color:#8a8a8a;font-weight:normal;"><span style="display:inline-block;transform:scaleX(0.95);transform-origin:left center">3d</span></div>
<div class="a t" style="left:119px;top:1119.76px;font-size:13px;color:#ececec;font-weight:normal;"><span style="display:inline-block;transform:scaleX(0.98);transform-origin:left center">directionalLight1</span></div>
<svg class="a" style="left:322.5px;top:1120.5px;" width="16" height="16" viewBox="0 0 16 16"><path d="M4.2 3.2 A6.3 6.3 0 1 1 4.2 12.8" fill="none" stroke="#d0d0d0" stroke-width="1.3"/><path d="M2.5 8 L7 4.8 V6.9 H12 V9.1 H7 V11.2 Z" fill="#d0d0d0"/></svg>
<svg class="a" style="left:348px;top:1123.5px;" width="16" height="10" viewBox="0 0 16 10"><path d="M1 5 Q8 -2 15 5 Q8 12 1 5 Z" fill="none" stroke="#d8d8d8" stroke-width="1.3"/><circle cx="8" cy="5" r="2.6" fill="#d8d8d8"/></svg>
<div class="a t" style="left:102px;top:1139.70px;font-size:10px;color:#8a8a8a;font-weight:normal;"><span style="display:inline-block;transform:scaleX(0.95);transform-origin:left center">3d</span></div>
<div class="a t" style="left:119px;top:1141.76px;font-size:13px;color:#ececec;font-weight:normal;"><span style="display:inline-block;transform:scaleX(0.98);transform-origin:left center">camera1</span></div>
<svg class="a" style="left:322.5px;top:1142.5px;" width="16" height="16" viewBox="0 0 16 16"><path d="M4.2 3.2 A6.3 6.3 0 1 1 4.2 12.8" fill="none" stroke="#d0d0d0" stroke-width="1.3"/><path d="M2.5 8 L7 4.8 V6.9 H12 V9.1 H7 V11.2 Z" fill="#d0d0d0"/></svg>
<svg class="a" style="left:348px;top:1145.5px;" width="16" height="10" viewBox="0 0 16 10"><path d="M1 5 Q8 -2 15 5 Q8 12 1 5 Z" fill="none" stroke="#d8d8d8" stroke-width="1.3"/><circle cx="8" cy="5" r="2.6" fill="#d8d8d8"/></svg>
<div class="a t" style="left:102px;top:1161.70px;font-size:10px;color:#8a8a8a;font-weight:normal;"><span style="display:inline-block;transform:scaleX(0.95);transform-origin:left center">3d</span></div>
<svg class="a" style="left:86.0px;top:1169px;" width="4" height="8" viewBox="0 0 4 8"><path d="M0 0 V8 L4 4 Z" fill="#b8b8b8"/></svg>
<div class="a t" style="left:119px;top:1163.76px;font-size:13px;color:#ececec;font-weight:normal;"><span style="display:inline-block;transform:scaleX(0.98);transform-origin:left center">cubeModel1</span></div>
<svg class="a" style="left:322.5px;top:1164.5px;" width="16" height="16" viewBox="0 0 16 16"><path d="M4.2 3.2 A6.3 6.3 0 1 1 4.2 12.8" fill="none" stroke="#d0d0d0" stroke-width="1.3"/><path d="M2.5 8 L7 4.8 V6.9 H12 V9.1 H7 V11.2 Z" fill="#d0d0d0"/></svg>
<svg class="a" style="left:348px;top:1167.5px;" width="16" height="10" viewBox="0 0 16 10"><path d="M1 5 Q8 -2 15 5 Q8 12 1 5 Z" fill="none" stroke="#d8d8d8" stroke-width="1.3"/><circle cx="8" cy="5" r="2.6" fill="#d8d8d8"/></svg>
<div class="a" style="left:58px;top:1184px;width:388px;height:22px;background:#4191c7"></div>
<div class="a t" style="left:62px;top:1183.70px;font-size:10px;color:#a8cce6;font-weight:normal;"><span style="display:inline-block;transform:scaleX(0.95);transform-origin:left center">3d</span></div>
<svg class="a" style="left:44px;top:1193.0px;" width="8" height="4" viewBox="0 0 8 4"><path d="M0 0 H8 L4 4 Z" fill="#b8b8b8"/></svg>
<div class="a t" style="left:79px;top:1185.76px;font-size:13px;color:#ececec;font-weight:normal;"><span style="display:inline-block;transform:scaleX(0.98);transform-origin:left center">view3D_blue_third</span></div>
<svg class="a" style="left:322.5px;top:1186.5px;" width="16" height="16" viewBox="0 0 16 16"><path d="M4.2 3.2 A6.3 6.3 0 1 1 4.2 12.8" fill="none" stroke="#a9cde8" stroke-width="1.3"/><path d="M2.5 8 L7 4.8 V6.9 H12 V9.1 H7 V11.2 Z" fill="#a9cde8"/></svg>
<svg class="a" style="left:348px;top:1189.5px;" width="16" height="10" viewBox="0 0 16 10"><path d="M1 5 Q8 -2 15 5 Q8 12 1 5 Z" fill="none" stroke="#d8d8d8" stroke-width="1.3"/><circle cx="8" cy="5" r="2.6" fill="#d8d8d8"/></svg>
<div class="a t" style="left:82px;top:1205.70px;font-size:10px;color:#8a8a8a;font-weight:normal;"><span style="display:inline-block;transform:scaleX(0.95);transform-origin:left center">3d</span></div>
<svg class="a" style="left:64px;top:1215.0px;" width="8" height="4" viewBox="0 0 8 4"><path d="M0 0 H8 L4 4 Z" fill="#b8b8b8"/></svg>
<div class="a t" style="left:99px;top:1207.76px;font-size:13px;color:#ececec;font-weight:normal;"><span style="display:inline-block;transform:scaleX(0.98);transform-origin:left center">scene2</span></div>
<svg class="a" style="left:322.5px;top:1208.5px;" width="16" height="16" viewBox="0 0 16 16"><path d="M4.2 3.2 A6.3 6.3 0 1 1 4.2 12.8" fill="none" stroke="#d0d0d0" stroke-width="1.3"/><path d="M2.5 8 L7 4.8 V6.9 H12 V9.1 H7 V11.2 Z" fill="#d0d0d0"/></svg>
<svg class="a" style="left:348px;top:1211.5px;" width="16" height="10" viewBox="0 0 16 10"><path d="M1 5 Q8 -2 15 5 Q8 12 1 5 Z" fill="none" stroke="#d8d8d8" stroke-width="1.3"/><circle cx="8" cy="5" r="2.6" fill="#d8d8d8"/></svg>
<div class="a t" style="left:102px;top:1227.70px;font-size:10px;color:#8a8a8a;font-weight:normal;"><span style="display:inline-block;transform:scaleX(0.95);transform-origin:left center">3d</span></div>
<div class="a t" style="left:119px;top:1229.76px;font-size:13px;color:#ececec;font-weight:normal;"><span style="display:inline-block;transform:scaleX(0.98);transform-origin:left center">directionalLight2</span></div>
<svg class="a" style="left:322.5px;top:1230.5px;" width="16" height="16" viewBox="0 0 16 16"><path d="M4.2 3.2 A6.3 6.3 0 1 1 4.2 12.8" fill="none" stroke="#d0d0d0" stroke-width="1.3"/><path d="M2.5 8 L7 4.8 V6.9 H12 V9.1 H7 V11.2 Z" fill="#d0d0d0"/></svg>
<svg class="a" style="left:348px;top:1233.5px;" width="16" height="10" viewBox="0 0 16 10"><path d="M1 5 Q8 -2 15 5 Q8 12 1 5 Z" fill="none" stroke="#d8d8d8" stroke-width="1.3"/><circle cx="8" cy="5" r="2.6" fill="#d8d8d8"/></svg>
<div class="a t" style="left:102px;top:1249.70px;font-size:10px;color:#8a8a8a;font-weight:normal;"><span style="display:inline-block;transform:scaleX(0.95);transform-origin:left center">3d</span></div>
<div class="a t" style="left:119px;top:1251.76px;font-size:13px;color:#ececec;font-weight:normal;"><span style="display:inline-block;transform:scaleX(0.98);transform-origin:left center">camera2</span></div>
<svg class="a" style="left:322.5px;top:1252.5px;" width="16" height="16" viewBox="0 0 16 16"><path d="M4.2 3.2 A6.3 6.3 0 1 1 4.2 12.8" fill="none" stroke="#d0d0d0" stroke-width="1.3"/><path d="M2.5 8 L7 4.8 V6.9 H12 V9.1 H7 V11.2 Z" fill="#d0d0d0"/></svg>
<svg class="a" style="left:348px;top:1255.5px;" width="16" height="10" viewBox="0 0 16 10"><path d="M1 5 Q8 -2 15 5 Q8 12 1 5 Z" fill="none" stroke="#d8d8d8" stroke-width="1.3"/><circle cx="8" cy="5" r="2.6" fill="#d8d8d8"/></svg>
<div class="a t" style="left:102px;top:1271.70px;font-size:10px;color:#8a8a8a;font-weight:normal;"><span style="display:inline-block;transform:scaleX(0.95);transform-origin:left center">3d</span></div>
<svg class="a" style="left:84px;top:1281.0px;" width="8" height="4" viewBox="0 0 8 4"><path d="M0 0 H8 L4 4 Z" fill="#b8b8b8"/></svg>
<div class="a t" style="left:119px;top:1273.76px;font-size:13px;color:#ececec;font-weight:normal;"><span style="display:inline-block;transform:scaleX(0.98);transform-origin:left center">cubeModel2</span></div>
<svg class="a" style="left:322.5px;top:1274.5px;" width="16" height="16" viewBox="0 0 16 16"><path d="M4.2 3.2 A6.3 6.3 0 1 1 4.2 12.8" fill="none" stroke="#d0d0d0" stroke-width="1.3"/><path d="M2.5 8 L7 4.8 V6.9 H12 V9.1 H7 V11.2 Z" fill="#d0d0d0"/></svg>
<svg class="a" style="left:348px;top:1277.5px;" width="16" height="10" viewBox="0 0 16 10"><path d="M1 5 Q8 -2 15 5 Q8 12 1 5 Z" fill="none" stroke="#d8d8d8" stroke-width="1.3"/><circle cx="8" cy="5" r="2.6" fill="#d8d8d8"/></svg>
<div class="a t" style="left:122px;top:1293.70px;font-size:10px;color:#8a8a8a;font-weight:normal;"><span style="display:inline-block;transform:scaleX(0.95);transform-origin:left center">3d</span></div>
<div class="a t" style="left:139px;top:1295.76px;font-size:13px;color:#ececec;font-weight:normal;"><span style="display:inline-block;transform:scaleX(0.98);transform-origin:left center">cubeMaterial2</span></div>
<svg class="a" style="left:322.5px;top:1296.5px;" width="16" height="16" viewBox="0 0 16 16"><path d="M4.2 3.2 A6.3 6.3 0 1 1 4.2 12.8" fill="none" stroke="#d0d0d0" stroke-width="1.3"/><path d="M2.5 8 L7 4.8 V6.9 H12 V9.1 H7 V11.2 Z" fill="#d0d0d0"/></svg>
<svg class="a" style="left:348px;top:1299.5px;" width="16" height="10" viewBox="0 0 16 10"><path d="M1 5 Q8 -2 15 5 Q8 12 1 5 Z" fill="none" stroke="#d8d8d8" stroke-width="1.3"/><circle cx="8" cy="5" r="2.6" fill="#d8d8d8"/></svg>
<div class="a" style="left:447px;top:17px;width:1680px;height:24px;background:#1b1b1b"></div>
<div class="a" style="left:447px;top:41px;width:1668px;height:24px;background:#1b1b1b"></div>
<div class="a" style="left:2115px;top:41px;width:11px;height:1127px;background:#262626"></div>
<div class="a" style="left:2126px;top:17px;width:1px;height:1361px;background:#3a3a3a"></div>
<div class="a" style="left:447px;top:65px;width:1668px;height:1103px;background:#000"></div>
<div class="a" style="left:2103px;top:66px;width:10px;height:1089px;background:#1b1b1b"></div>
<div class="a" style="left:447px;top:1155px;width:1656px;height:10px;background:#1b1b1b"></div>
<div class="a" style="left:1245px;top:1155px;width:273px;height:10px;background:#5e5e5e"></div>
<div class="a" style="left:447px;top:1167px;width:1680px;height:1px;background:#3a3a3a"></div>
<div class="a" style="left:2115px;top:1035px;width:11px;height:82px;background:#111"></div>
<div class="a t" style="left:2110px;top:1057px;width:50px;font-size:10px;color:#8a8a8a;transform:rotate(90deg);transform-origin:0 0;left:2126px;top:1042px;">Text Editor</div>
<svg class="a" style="left:2116px;top:1128px;" width="10" height="10" viewBox="0 0 10 10"><rect x="0.5" y="0.5" width="9" height="8" fill="none" stroke="#bbb"/><path d="M0.5 4.5 H9.5" stroke="#bbb"/></svg>
<svg class="a" style="left:2116px;top:1152px;" width="10" height="10" viewBox="0 0 10 10"><rect x="0.5" y="0.5" width="9" height="8" fill="none" stroke="#bbb"/><path d="M5 0.5 V8.5" stroke="#bbb"/></svg>
<svg class="a" style="left:454px;top:22px;" width="10" height="15" viewBox="0 0 10 15"><path d="M8 1.5 L2 7.5 L8 13.5" fill="none" stroke="#e3b41b" stroke-width="1.6"/></svg>
<svg class="a" style="left:478px;top:22px;" width="10" height="15" viewBox="0 0 10 15"><path d="M2 1.5 L8 7.5 L2 13.5" fill="none" stroke="#777" stroke-width="1.4"/></svg>
<svg class="a" style="left:501px;top:22px;" width="14" height="14" viewBox="0 0 14 14"><rect x="0.5" y="6" width="8" height="7" fill="#666"/><path d="M5 6 V3.5 A3 3 0 0 1 11 3.5 V6" fill="none" stroke="#666" stroke-width="1.4"/><rect x="3.5" y="8.5" width="2" height="2" fill="#333"/></svg>
<svg class="a" style="left:525px;top:20px;" width="15" height="18" viewBox="0 0 15 18"><path d="M0 0 H9 L14 5 V17 H0Z" fill="#f0f0f0"/><text x="0" y="15" font-size="8" fill="#1a9ad0" font-family="Liberation Sans" font-weight="bold">qml</text></svg>
<div class="a t" style="left:548px;top:19.75px;font-size:12.5px;color:#e2e2e2;font-weight:normal;"><span style="display:inline-block;transform:scaleX(0.96);transform-origin:left center">Screen01.ui.qml*</span></div>
<svg class="a" style="left:732.5px;top:22px;" width="10" height="14" viewBox="0 0 10 14"><path d="M1 5.5 L5 1 L9 5.5 Z M1 8.5 L5 13 L9 8.5 Z" fill="#c0c0c0"/></svg>
<div class="a" style="left:746px;top:21px;width:1px;height:16px;background:#555"></div>
<svg class="a" style="left:752px;top:23px;" width="13" height="13" viewBox="0 0 13 13"><path d="M1 1 L12 12 M12 1 L1 12" stroke="#bbb" stroke-width="1.3"/></svg>
<div class="a" style="left:770px;top:21px;width:1px;height:16px;background:#555"></div>
<svg class="a" style="left:776px;top:21px;" width="16" height="16" viewBox="0 0 16 16"><circle cx="8" cy="8" r="6.8" fill="none" stroke="#c8c8c8" stroke-width="1.4"/><path d="M6 4.8 L11.5 8 L6 11.2Z" fill="#c8c8c8"/></svg>
<div class="a t" style="left:801.5px;top:19.75px;font-size:12.5px;color:#e2e2e2;font-weight:normal;"><span style="display:inline-block;transform:scaleX(0.93);transform-origin:left center">100 %</span></div>
<svg class="a" style="left:841.5px;top:22px;" width="10" height="14" viewBox="0 0 10 14"><path d="M1 5.5 L5 1 L9 5.5 Z M1 8.5 L5 13 L9 8.5 Z" fill="#c0c0c0"/></svg>
<div class="a t" style="left:867px;top:19.75px;font-size:12.5px;color:#e2e2e2;font-weight:normal;"><span style="display:inline-block;transform:scaleX(0.93);transform-origin:left center">Default</span></div>
<svg class="a" style="left:931px;top:22px;" width="10" height="14" viewBox="0 0 10 14"><path d="M1 5.5 L5 1 L9 5.5 Z M1 8.5 L5 13 L9 8.5 Z" fill="#c0c0c0"/></svg>
<div class="a" style="left:945px;top:21px;width:1px;height:16px;background:#555"></div>
<div class="a" style="left:949px;top:21px;width:1px;height:16px;background:#555"></div>
<svg class="a" style="left:956px;top:22px;" width="18" height="16" viewBox="0 0 18 16"><path d="M8 1 V13 M2 7 H14 M8 1 L6 3 M8 1 L10 3 M2 7 L4 5 M2 7 L4 9" stroke="#c4c4c4" stroke-width="1.1" fill="none"/><circle cx="12.5" cy="11.5" r="3.5" fill="#d04a4a"/><path d="M10.8 11.5 A1.8 1.8 0 1 0 12.5 9.7" stroke="#f3c9c9" stroke-width="0.9" fill="none"/></svg>
<svg class="a" style="left:980px;top:22px;" width="18" height="16" viewBox="0 0 18 16"><path d="M1 4 V1 H4 M11 1 H14 V4 M14 11 V14 H11 M4 14 H1 V11" stroke="#c4c4c4" stroke-width="1.2" fill="none"/><circle cx="13" cy="12" r="3.5" fill="#d04a4a"/><path d="M11.3 12 A1.8 1.8 0 1 0 13 10.2" stroke="#f3c9c9" stroke-width="0.9" fill="none"/></svg>
<div class="a" style="left:1003px;top:21px;width:1px;height:16px;background:#555"></div>
<svg class="a" style="left:1009px;top:21px;" width="16" height="16" viewBox="0 0 16 16"><rect x="0.5" y="0.5" width="15" height="15" fill="none" stroke="#c4c4c4" stroke-width="1"/><rect x="3.5" y="3.5" width="9" height="9" fill="none" stroke="#c4c4c4" stroke-width="1.2"/><path d="M0.5 2.5 H15.5 M0.5 13.5 H15.5" stroke="#c4c4c4" stroke-width="0.8"/></svg>
<svg class="a" style="left:1033px;top:21px;" width="16" height="16" viewBox="0 0 16 16"><rect x="0.5" y="0.5" width="15" height="15" fill="none" stroke="#888" stroke-width="1"/><rect x="3.5" y="3.5" width="9" height="9" fill="none" stroke="#888" stroke-width="1"/><circle cx="11.5" cy="11.5" r="3.3" fill="#888"/></svg>
<div class="a" style="left:1057px;top:21px;width:1px;height:16px;background:#555"></div>
<svg class="a" style="left:1066px;top:25px;" width="13" height="8" viewBox="0 0 13 8"><rect x="0.5" y="0.5" width="3" height="7" fill="none" stroke="#777"/><rect x="4.8" y="0.5" width="3" height="7" fill="none" stroke="#777"/><rect x="9.1" y="0.5" width="3" height="7" fill="none" stroke="#777"/></svg>
<svg class="a" style="left:1092px;top:22px;" width="8" height="14" viewBox="0 0 8 14"><rect x="0.5" y="0.5" width="7" height="3" fill="none" stroke="#777"/><rect x="0.5" y="5" width="7" height="3" fill="none" stroke="#777"/><rect x="0.5" y="9.5" width="7" height="3" fill="none" stroke="#777"/></svg>
<svg class="a" style="left:1114px;top:24px;" width="13" height="11" viewBox="0 0 13 11"><rect x="0.5" y="0.5" width="5" height="4" fill="none" stroke="#777"/><rect x="7" y="0.5" width="5" height="4" fill="none" stroke="#777"/><rect x="0.5" y="6" width="5" height="4" fill="none" stroke="#777"/><rect x="7" y="6" width="5" height="4" fill="none" stroke="#777"/></svg>
<div class="a" style="left:1135px;top:21px;width:1px;height:16px;background:#555"></div>
<div class="a" style="left:1140px;top:20px;width:71px;height:18px;background:#262626"></div>
<div class="a t" style="left:1142px;top:20.25px;font-size:12.5px;color:#f0f0f0;font-weight:normal;"><span style="display:inline-block;transform:scaleX(0.93);transform-origin:left center">Default</span></div>
<svg class="a" style="left:1218.5px;top:27.0px;" width="8" height="4" viewBox="0 0 8 4"><path d="M0 0 H8 L4 4 Z" fill="#c8c8c8"/></svg>
<div class="a" style="left:1231px;top:21px;width:1px;height:16px;background:#555"></div>
<svg class="a" style="left:1339px;top:22px;" width="10" height="14" viewBox="0 0 10 14"><path d="M1 5.5 L5 1 L9 5.5 Z M1 8.5 L5 13 L9 8.5 Z" fill="#c0c0c0"/></svg>
<div class="a" style="left:1353px;top:21px;width:1px;height:16px;background:#555"></div>
<svg class="a" style="left:453px;top:46px;" width="14" height="15" viewBox="0 0 14 15"><path d="M0.5 14 V0.5 H13" fill="none" stroke="#c4c4c4" stroke-width="1"/><path d="M9 4 L11 2 L13 4Z M4 9 V13 L2 11Z" fill="#c4c4c4"/><path d="M6 8 L12 14 M12 8 L6 14" stroke="#c4c4c4" stroke-width="1"/></svg>
<svg class="a" style="left:476px;top:46px;" width="14" height="15" viewBox="0 0 14 15"><path d="M0.5 14 V0.5 H13" fill="none" stroke="#c4c4c4" stroke-width="1"/><path d="M9 4 L11 2 L13 4Z M4 9 V13 L2 11Z" fill="#c4c4c4"/><path d="M6 14 V9 Q9 6 12 9 V14 M6 11 H12" stroke="#c4c4c4" stroke-width="1.2" fill="none"/></svg>
<div class="a" style="left:496px;top:42px;width:23px;height:20px;background:#121212"></div>
<svg class="a" style="left:500px;top:46px;" width="14" height="15" viewBox="0 0 14 15"><path d="M0.5 14 V0.5 H13" fill="none" stroke="#c4c4c4" stroke-width="1"/><path d="M9 4 L11 2 L13 4Z M4 9 V13 L2 11Z" fill="#c4c4c4"/><rect x="6" y="7" width="7" height="7" fill="#c4c4c4"/></svg>
<div class="a" style="left:523px;top:45px;width:1px;height:15px;background:#555"></div>
<svg class="a" style="left:531px;top:47px;" width="14" height="12" viewBox="0 0 14 12"><rect x="0.5" y="0.5" width="13" height="11" fill="none" stroke="#c4c4c4" stroke-width="1" stroke-dasharray="1 1"/><rect x="3" y="3" width="8" height="6" fill="none" stroke="#c4c4c4" stroke-width="1.2"/></svg>
<div class="a" style="left:553px;top:45px;width:1px;height:15px;background:#555"></div>
<div class="a" style="left:559px;top:45px;width:94px;height:16px;background:#131313"></div>
<div class="a t" style="left:569px;top:43.70px;font-size:10px;color:#8a8a8a;font-weight:normal;"><span style="display:inline-block;transform:scaleX(0.84);transform-origin:left center">Override Width</span></div>
<div class="a" style="left:659px;top:45px;width:94px;height:16px;background:#131313"></div>
<div class="a t" style="left:669px;top:43.70px;font-size:10px;color:#8a8a8a;font-weight:normal;"><span style="display:inline-block;transform:scaleX(0.84);transform-origin:left center">Override Height</span></div>
<svg class="a" style="left:1914px;top:47px;" width="12" height="12" viewBox="0 0 12 12"><rect x="0" y="0" width="12" height="12" fill="#000"/><rect x="2" y="2" width="4" height="4" fill="#fff"/><rect x="6" y="6" width="4" height="4" fill="#fff"/></svg>
<svg class="a" style="left:1933px;top:46.5px;" width="10" height="14" viewBox="0 0 10 14"><path d="M1 5.5 L5 1 L9 5.5 Z M1 8.5 L5 13 L9 8.5 Z" fill="#c0c0c0"/></svg>
<div class="a t" style="left:1953.5px;top:44.25px;font-size:12.5px;color:#e2e2e2;font-weight:normal;"><span style="display:inline-block;transform:scaleX(0.9);transform-origin:left center">2D/3D</span></div>
<svg class="a" style="left:2015.5px;top:46.5px;" width="10" height="14" viewBox="0 0 10 14"><path d="M1 5.5 L5 1 L9 5.5 Z M1 8.5 L5 13 L9 8.5 Z" fill="#c0c0c0"/></svg>
<div class="a t" style="left:2035.5px;top:44.25px;font-size:12.5px;color:#e2e2e2;font-weight:normal;"><span style="display:inline-block;transform:scaleX(0.93);transform-origin:left center">100 %</span></div>
<svg class="a" style="left:2075px;top:46.5px;" width="10" height="14" viewBox="0 0 10 14"><path d="M1 5.5 L5 1 L9 5.5 Z M1 8.5 L5 13 L9 8.5 Z" fill="#c0c0c0"/></svg>
<svg class="a" style="left:2095px;top:47px;" width="13" height="13" viewBox="0 0 13 13"><path d="M3 3 A5 5 0 1 1 2 7" fill="none" stroke="#c4c4c4" stroke-width="1.2"/><path d="M1 0.5 V4.5 H5" fill="none" stroke="#c4c4c4" stroke-width="1.2"/></svg>
<div class="a" style="left:636px;top:251px;width:1280px;height:720px;background:#fff"></div>
<svg class="a" style="left:0px;top:0px;pointer-events:none" width="2837" height="1378" viewBox="0 0 2837 1378"><polygon points="883.0,589.0 954.0,560.0 921.5,637.0 852.0,653.0" fill="#931414" stroke="#931414" stroke-width="0.7" stroke-linejoin="round"/><polygon points="954.0,560.0 995.0,629.0 973.0,700.0 921.5,637.0" fill="#a81818" stroke="#a81818" stroke-width="0.7" stroke-linejoin="round"/><polygon points="852.0,653.0 921.5,637.0 881.5,735.0 813.0,735.0" fill="#121a50" stroke="#121a50" stroke-width="0.7" stroke-linejoin="round"/><polygon points="921.5,637.0 973.0,700.0 946.0,786.0 881.5,735.0" fill="#141e5e" stroke="#141e5e" stroke-width="0.7" stroke-linejoin="round"/><polygon points="813.0,735.0 881.5,735.0 946.0,786.0 875.0,776.0" fill="#0b1134" stroke="#0b1134" stroke-width="0.7" stroke-linejoin="round"/><polygon points="1166.0,402.0 1269.0,382.0 1200.0,555.0 1102.5,525.0" fill="#2e932e" stroke="#2e932e" stroke-width="0.7" stroke-linejoin="round"/><polygon points="1269.0,382.0 1342.0,468.0 1305.5,607.0 1200.0,555.0" fill="#37a933" stroke="#37a933" stroke-width="0.7" stroke-linejoin="round"/><polygon points="1102.5,525.0 1200.0,555.0 1305.5,607.0" fill="#1f6a1f" stroke="#1f6a1f" stroke-width="0.7" stroke-linejoin="round"/><polygon points="1471.7,521.6 1528.6,491.0 1461.0,603.0 1413.5,609.7" fill="#077c9c" stroke="#077c9c" stroke-width="0.7" stroke-linejoin="round"/><polygon points="1528.6,491.0 1610.0,573.4 1567.0,670.5 1461.0,603.0" fill="#0789ae" stroke="#0789ae" stroke-width="0.7" stroke-linejoin="round"/><polygon points="1413.5,609.7 1461.0,603.0 1567.0,670.5 1507.7,663.7" fill="#05475a" stroke="#05475a" stroke-width="0.7" stroke-linejoin="round"/></svg>
<div class="a" style="left:1407px;top:435px;width:402px;height:402px;border:2px solid #d02aa0;box-sizing:border-box"></div>
<div class="a" style="left:1408px;top:417px;width:115px;height:19px;background:#d02aa0"></div>
<div class="a t" style="left:1412px;top:417.26px;font-size:13px;color:#f8f8f8;font-weight:normal;"><span style="display:inline-block;transform:scaleX(0.98);transform-origin:left center">view3D_blue_third</span></div>
<div class="a" style="left:1405px;top:433px;width:6px;height:6px;background:#fff;border:1px solid #d02aa0;box-sizing:border-box"></div>
<div class="a" style="left:1405px;top:633px;width:6px;height:6px;background:#fff;border:1px solid #d02aa0;box-sizing:border-box"></div>
<div class="a" style="left:1405px;top:833px;width:6px;height:6px;background:#fff;border:1px solid #d02aa0;box-sizing:border-box"></div>
<div class="a" style="left:1605px;top:433px;width:6px;height:6px;background:#fff;border:1px solid #d02aa0;box-sizing:border-box"></div>
<div class="a" style="left:1605px;top:833px;width:6px;height:6px;background:#fff;border:1px solid #d02aa0;box-sizing:border-box"></div>
<div class="a" style="left:1805px;top:433px;width:6px;height:6px;background:#fff;border:1px solid #d02aa0;box-sizing:border-box"></div>
<div class="a" style="left:1805px;top:633px;width:6px;height:6px;background:#fff;border:1px solid #d02aa0;box-sizing:border-box"></div>
<div class="a" style="left:1805px;top:833px;width:6px;height:6px;background:#fff;border:1px solid #d02aa0;box-sizing:border-box"></div>
<div class="a" style="left:447px;top:1168px;width:1679px;height:210px;background:#262626"></div>
<div class="a" style="left:447px;top:1168px;width:92px;height:22px;background:#dcdcdc"></div>
<div class="a t" style="left:-507px;width:2000px;text-align:center;top:1169.74px;font-size:12px;color:#262626;font-weight:normal;"><span style="display:inline-block;transform:scaleX(0.92);transform-origin:center center">States</span></div>
<div class="a" style="left:539px;top:1168px;width:92px;height:22px;background:#111"></div>
<div class="a t" style="left:-415px;width:2000px;text-align:center;top:1169.74px;font-size:12px;color:#e6e6e6;font-weight:normal;"><span style="display:inline-block;transform:scaleX(0.92);transform-origin:center center">Timeline</span></div>
<div class="a" style="left:450px;top:1193px;width:222px;height:185px;background:#4292c6"></div>
<div class="a t" style="left:476px;top:1196.70px;font-size:10px;color:#e4ecf2;font-weight:normal;"><span style="display:inline-block;transform:scaleX(0.88);transform-origin:left center">base state</span></div>
<div class="a" style="left:480px;top:1266px;width:162px;height:92px;background:#fff;border:1px solid #111;box-sizing:border-box"></div>
<svg class="a" style="left:0px;top:0px;" width="2837" height="1378" viewBox="0 0 2837 1378"><polygon points="512.0,1309.4 520.9,1305.8 516.8,1315.4 508.1,1317.4" fill="#931414" stroke="#931414" stroke-width="0.7" stroke-linejoin="round"/><polygon points="520.9,1305.8 526.0,1314.4 523.2,1323.2 516.8,1315.4" fill="#a81818" stroke="#a81818" stroke-width="0.7" stroke-linejoin="round"/><polygon points="508.1,1317.4 516.8,1315.4 511.8,1327.6 503.2,1327.6" fill="#121a50" stroke="#121a50" stroke-width="0.7" stroke-linejoin="round"/><polygon points="516.8,1315.4 523.2,1323.2 519.9,1334.0 511.8,1327.6" fill="#141e5e" stroke="#141e5e" stroke-width="0.7" stroke-linejoin="round"/><polygon points="503.2,1327.6 511.8,1327.6 519.9,1334.0 511.0,1332.8" fill="#0b1134" stroke="#0b1134" stroke-width="0.7" stroke-linejoin="round"/><polygon points="547.4,1286.0 560.2,1283.5 551.6,1305.1 539.4,1301.4" fill="#2e932e" stroke="#2e932e" stroke-width="0.7" stroke-linejoin="round"/><polygon points="560.2,1283.5 569.4,1294.2 564.8,1311.6 551.6,1305.1" fill="#37a933" stroke="#37a933" stroke-width="0.7" stroke-linejoin="round"/><polygon points="539.4,1301.4 551.6,1305.1 564.8,1311.6" fill="#1f6a1f" stroke="#1f6a1f" stroke-width="0.7" stroke-linejoin="round"/><polygon points="585.6,1301.0 592.7,1297.1 584.2,1311.1 578.3,1312.0" fill="#077c9c" stroke="#077c9c" stroke-width="0.7" stroke-linejoin="round"/><polygon points="592.7,1297.1 602.9,1307.4 597.5,1319.6 584.2,1311.1" fill="#0789ae" stroke="#0789ae" stroke-width="0.7" stroke-linejoin="round"/><polygon points="578.3,1312.0 584.2,1311.1 597.5,1319.6 590.1,1318.7" fill="#05475a" stroke="#05475a" stroke-width="0.7" stroke-linejoin="round"/></svg>
<div class="a" style="left:2031px;top:1242px;width:87px;height:85px;border:1px solid #3a3a3a;box-sizing:border-box"></div>
<svg class="a" style="left:2069px;top:1279px;" width="13" height="13" viewBox="0 0 13 13"><path d="M6.5 0 V13 M0 6.5 H13" stroke="#d8d8d8" stroke-width="1.4"/></svg>
<div class="a" style="left:2127px;top:17px;width:432px;height:1361px;background:#262626"></div>
<div class="a" style="left:2557px;top:17px;width:2px;height:1361px;background:#161616"></div>
<div class="a" style="left:2127px;top:17px;width:430px;height:24px;background:#1a1a1a"></div>
<div class="a t" style="left:2133px;top:20.26px;font-size:13px;color:#d6d6d6;font-weight:normal;">Properties</div>
<svg class="a" style="left:2262px;top:22.5px;" width="10" height="14" viewBox="0 0 10 14"><path d="M1 5.5 L5 1 L9 5.5 Z M1 8.5 L5 13 L9 8.5 Z" fill="#c0c0c0"/></svg>
<div class="a" style="left:2276px;top:23px;width:1px;height:14px;background:#5a5a5a"></div>
<svg class="a" style="left:2514px;top:24px;" width="16" height="12" viewBox="0 0 16 12"><rect x="0.5" y="0.5" width="7" height="11" fill="none" stroke="#c8c8c8" stroke-width="1"/><path d="M0.5 6 H7.5 M10 6 H15 M12.5 3.5 V8.5" stroke="#c8c8c8" stroke-width="1"/></svg>
<svg class="a" style="left:2540px;top:25px;" width="12" height="11" viewBox="0 0 12 11"><rect x="0.5" y="0.5" width="11" height="10" fill="none" stroke="#c8c8c8" stroke-width="1"/><path d="M0.5 2.5 H11.5" stroke="#c8c8c8" stroke-width="1"/><path d="M3.5 5 L8.5 5 L6 7.5 Z" fill="#c8c8c8"/></svg>
<div class="a" style="left:2127px;top:41px;width:430px;height:19px;background:#1b1b1b"></div>
<svg class="a" style="left:2131.5px;top:48.0px;" width="8" height="4" viewBox="0 0 8 4"><path d="M0 0 H8 L4 4 Z" fill="#c8c8c8"/></svg>
<div class="a t" style="left:2149px;top:41.26px;font-size:13px;color:#e6e6e6;font-weight:normal;"><span style="display:inline-block;transform:scaleX(0.93);transform-origin:left center">Type</span></div>
<div class="a t" style="left:2135px;top:67.26px;font-size:13px;color:#e8e8e8;font-weight:normal;"><span style="display:inline-block;transform:scaleX(0.93);transform-origin:left center">Type</span></div>
<div class="a" style="left:2275px;top:64px;width:248px;height:24px;background:#383838"></div>
<div class="a t" style="left:2291px;top:67.25px;font-size:12.5px;color:#e8e8e8;font-weight:normal;"><span style="display:inline-block;transform:scaleX(0.93);transform-origin:left center">View3D</span></div>
<div class="a t" style="left:2135px;top:94.26px;font-size:13px;color:#e8e8e8;font-weight:normal;"><span style="display:inline-block;transform:scaleX(0.93);transform-origin:left center">id</span></div>
<div class="a" style="left:2275px;top:92px;width:248px;height:22px;border:1px solid #4a4a4a;box-sizing:border-box"></div>
<div class="a t" style="left:2279px;top:94.26px;font-size:13px;color:#e8e8e8;font-weight:normal;"><span style="display:inline-block;transform:scaleX(0.985);transform-origin:left center">view3D_blue_third</span></div>
<svg class="a" style="left:2527.5px;top:95px;" width="16" height="16" viewBox="0 0 16 16"><path d="M4.2 3.2 A6.3 6.3 0 1 1 4.2 12.8" fill="none" stroke="#cfcfcf" stroke-width="1.3"/><path d="M2.5 8 L7 4.8 V6.9 H12 V9.1 H7 V11.2 Z" fill="#cfcfcf"/></svg>
<div class="a" style="left:2127px;top:118px;width:430px;height:20px;background:#1b1b1b"></div>
<svg class="a" style="left:2131.5px;top:125.5px;" width="8" height="4" viewBox="0 0 8 4"><path d="M0 0 H8 L4 4 Z" fill="#c8c8c8"/></svg>
<div class="a t" style="left:2149px;top:118.76px;font-size:13px;color:#e6e6e6;font-weight:normal;"><span style="display:inline-block;transform:scaleX(0.93);transform-origin:left center">Geometry</span></div>
<div class="a t" style="left:2135px;top:144.26px;font-size:13px;color:#e8e8e8;font-weight:normal;"><span style="display:inline-block;transform:scaleX(0.93);transform-origin:left center">Position</span></div>
<div class="a t" style="left:2278px;top:144.25px;font-size:12.5px;color:#e8e8e8;font-weight:normal;">X</div>
<svg class="a" style="left:2295.5px;top:147px;" width="12" height="12" viewBox="0 0 12 12"><path d="M3 0.8 H9 L11.6 6 L9 11.2 H3 L0.4 6 Z" fill="#f2f2f2"/><circle cx="6" cy="6" r="2.2" fill="#1e1e1e"/></svg>
<div class="a" style="left:2312px;top:142px;width:75px;height:21px;border:1px solid #3c3c3c;box-sizing:border-box;background:#262626"></div>
<div class="a" style="left:2327px;top:142px;width:1px;height:21px;background:#3c3c3c"></div>
<svg class="a" style="left:2315px;top:144px;" width="10" height="17" viewBox="0 0 10 17"><path d="M1 6 L5 2 L9 6 M1 11 L5 15 L9 11" fill="none" stroke="#bbb" stroke-width="1"/></svg>
<div class="a t" style="left:382px;width:2000px;text-align:right;top:143.24px;font-size:12px;color:#3a9fe0;font-weight:normal;"><span style="display:inline-block;transform:scaleX(0.95);transform-origin:right center">772</span></div>
<div class="a t" style="left:2402px;top:144.25px;font-size:12.5px;color:#e8e8e8;font-weight:normal;">Y</div>
<svg class="a" style="left:2419.5px;top:147px;" width="12" height="12" viewBox="0 0 12 12"><path d="M3 0.8 H9 L11.6 6 L9 11.2 H3 L0.4 6 Z" fill="#f2f2f2"/><circle cx="6" cy="6" r="2.2" fill="#1e1e1e"/></svg>
<div class="a" style="left:2436px;top:142px;width:75px;height:21px;border:1px solid #3c3c3c;box-sizing:border-box;background:#262626"></div>
<div class="a" style="left:2451px;top:142px;width:1px;height:21px;background:#3c3c3c"></div>
<svg class="a" style="left:2439px;top:144px;" width="10" height="17" viewBox="0 0 10 17"><path d="M1 6 L5 2 L9 6 M1 11 L5 15 L9 11" fill="none" stroke="#bbb" stroke-width="1"/></svg>
<div class="a t" style="left:506px;width:2000px;text-align:right;top:143.24px;font-size:12px;color:#3a9fe0;font-weight:normal;"><span style="display:inline-block;transform:scaleX(0.95);transform-origin:right center">185</span></div>
<div class="a t" style="left:2135px;top:170.26px;font-size:13px;color:#e8e8e8;font-weight:normal;"><span style="display:inline-block;transform:scaleX(0.93);transform-origin:left center">Size</span></div>
<div class="a t" style="left:2277px;top:170.25px;font-size:12.5px;color:#e8e8e8;font-weight:normal;">W</div>
<svg class="a" style="left:2295.5px;top:173px;" width="12" height="12" viewBox="0 0 12 12"><path d="M3 0.8 H9 L11.6 6 L9 11.2 H3 L0.4 6 Z" fill="#f2f2f2"/><circle cx="6" cy="6" r="2.2" fill="#1e1e1e"/></svg>
<div class="a" style="left:2312px;top:169px;width:75px;height:21px;border:1px solid #3c3c3c;box-sizing:border-box;background:#262626"></div>
<div class="a" style="left:2327px;top:169px;width:1px;height:21px;background:#3c3c3c"></div>
<svg class="a" style="left:2315px;top:171px;" width="10" height="17" viewBox="0 0 10 17"><path d="M1 6 L5 2 L9 6 M1 11 L5 15 L9 11" fill="none" stroke="#bbb" stroke-width="1"/></svg>
<div class="a t" style="left:382px;width:2000px;text-align:right;top:170.24px;font-size:12px;color:#3a9fe0;font-weight:normal;"><span style="display:inline-block;transform:scaleX(0.95);transform-origin:right center">400</span></div>
<div class="a t" style="left:2401px;top:170.25px;font-size:12.5px;color:#e8e8e8;font-weight:normal;">H</div>
<svg class="a" style="left:2419.5px;top:173px;" width="12" height="12" viewBox="0 0 12 12"><path d="M3 0.8 H9 L11.6 6 L9 11.2 H3 L0.4 6 Z" fill="#f2f2f2"/><circle cx="6" cy="6" r="2.2" fill="#1e1e1e"/></svg>
<div class="a" style="left:2436px;top:169px;width:75px;height:21px;border:1px solid #3c3c3c;box-sizing:border-box;background:#262626"></div>
<div class="a" style="left:2451px;top:169px;width:1px;height:21px;background:#3c3c3c"></div>
<svg class="a" style="left:2439px;top:171px;" width="10" height="17" viewBox="0 0 10 17"><path d="M1 6 L5 2 L9 6 M1 11 L5 15 L9 11" fill="none" stroke="#bbb" stroke-width="1"/></svg>
<div class="a t" style="left:506px;width:2000px;text-align:right;top:170.24px;font-size:12px;color:#3a9fe0;font-weight:normal;"><span style="display:inline-block;transform:scaleX(0.95);transform-origin:right center">400</span></div>
<div class="a" style="left:2127px;top:194px;width:430px;height:20px;background:#1b1b1b"></div>
<svg class="a" style="left:2131.5px;top:201.5px;" width="8" height="4" viewBox="0 0 8 4"><path d="M0 0 H8 L4 4 Z" fill="#c8c8c8"/></svg>
<div class="a t" style="left:2149px;top:194.76px;font-size:13px;color:#e6e6e6;font-weight:normal;"><span style="display:inline-block;transform:scaleX(0.93);transform-origin:left center">Visibility</span></div>
<div class="a t" style="left:2135px;top:220.26px;font-size:13px;color:#e8e8e8;font-weight:normal;"><span style="display:inline-block;transform:scaleX(0.93);transform-origin:left center">Visibility</span></div>
<svg class="a" style="left:2280px;top:223px;" width="12" height="12" viewBox="0 0 12 12"><path d="M3 0.8 H9 L11.6 6 L9 11.2 H3 L0.4 6 Z" fill="#f2f2f2"/><circle cx="6" cy="6" r="2.2" fill="#1e1e1e"/></svg>
<div class="a" style="left:2296px;top:219px;width:22px;height:21px;border:1px solid #3c3c3c;box-sizing:border-box"></div>
<svg class="a" style="left:2300px;top:223px;" width="14" height="12" viewBox="0 0 14 12"><path d="M1.5 6.5 L5 10 L12.5 2" fill="none" stroke="#f0f0f0" stroke-width="1.6"/></svg>
<div class="a t" style="left:2325px;top:220.25px;font-size:12.5px;color:#e8e8e8;font-weight:normal;"><span style="display:inline-block;transform:scaleX(0.93);transform-origin:left center">Is Visible</span></div>
<svg class="a" style="left:2447px;top:223px;" width="12" height="12" viewBox="0 0 12 12"><path d="M3 0.8 H9 L11.6 6 L9 11.2 H3 L0.4 6 Z" fill="#f2f2f2"/><circle cx="6" cy="6" r="2.2" fill="#1e1e1e"/></svg>
<div class="a" style="left:2463px;top:219px;width:22px;height:21px;border:1px solid #3c3c3c;box-sizing:border-box"></div>
<div class="a t" style="left:2492px;top:220.25px;font-size:12.5px;color:#e8e8e8;font-weight:normal;"><span style="display:inline-block;transform:scaleX(0.93);transform-origin:left center">Clip</span></div>
<div class="a" style="left:2127px;top:1138px;width:430px;height:1px;background:#3a3a3a"></div>
<div class="a" style="left:2127px;top:1139px;width:430px;height:24px;background:#1a1a1a"></div>
<div class="a t" style="left:2133px;top:1141.76px;font-size:13px;color:#d6d6d6;font-weight:normal;"><span style="display:inline-block;transform:scaleX(0.93);transform-origin:left center">Connections</span></div>
<svg class="a" style="left:2262px;top:1144px;" width="10" height="14" viewBox="0 0 10 14"><path d="M1 5.5 L5 1 L9 5.5 Z M1 8.5 L5 13 L9 8.5 Z" fill="#c0c0c0"/></svg>
<div class="a" style="left:2276px;top:1145px;width:1px;height:14px;background:#5a5a5a"></div>
<svg class="a" style="left:2468px;top:1144px;" width="13" height="13" viewBox="0 0 13 13"><path d="M6.5 0.5 V12.5 M0.5 6.5 H12.5" stroke="#e0e0e0" stroke-width="1.6"/></svg>
<svg class="a" style="left:2492px;top:1150px;" width="13" height="2" viewBox="0 0 13 2"><path d="M0.5 1 H12.5" stroke="#777" stroke-width="1.4"/></svg>
<svg class="a" style="left:2514px;top:1145px;" width="16" height="12" viewBox="0 0 16 12"><rect x="0.5" y="0.5" width="7" height="11" fill="none" stroke="#c8c8c8" stroke-width="1"/><path d="M0.5 6 H7.5 M10 6 H15 M12.5 3.5 V8.5" stroke="#c8c8c8" stroke-width="1"/></svg>
<svg class="a" style="left:2540px;top:1146px;" width="12" height="11" viewBox="0 0 12 11"><rect x="0.5" y="0.5" width="11" height="10" fill="none" stroke="#c8c8c8" stroke-width="1"/><path d="M0.5 2.5 H11.5" stroke="#c8c8c8" stroke-width="1"/><path d="M3.5 5 L8.5 5 L6 7.5 Z" fill="#c8c8c8"/></svg>
<div class="a" style="left:2127px;top:1163px;width:430px;height:22px;background:#262626"></div>
<div class="a" style="left:2127px;top:1163px;width:92px;height:22px;background:#dcdcdc"></div>
<div class="a t" style="left:1173.0px;width:2000px;text-align:center;top:1164.73px;font-size:11.5px;color:#262626;font-weight:normal;"><span style="display:inline-block;transform:scaleX(0.92);transform-origin:center center">Connections</span></div>
<div class="a" style="left:2219px;top:1163px;width:92px;height:22px;background:#111111"></div>
<div class="a t" style="left:1265.0px;width:2000px;text-align:center;top:1164.73px;font-size:11.5px;color:#e6e6e6;font-weight:normal;"><span style="display:inline-block;transform:scaleX(0.92);transform-origin:center center">Bindings</span></div>
<div class="a" style="left:2311px;top:1163px;width:92px;height:22px;background:#111111"></div>
<div class="a t" style="left:1357.0px;width:2000px;text-align:center;top:1164.73px;font-size:11.5px;color:#e6e6e6;font-weight:normal;"><span style="display:inline-block;transform:scaleX(0.92);transform-origin:center center">Properties</span></div>
<div class="a" style="left:2127px;top:1185px;width:430px;height:3.5px;background:#dcdcdc"></div>
<div class="a" style="left:2129px;top:1191.5px;width:76px;height:30.5px;background:#464646;border:1px solid #181818;box-sizing:border-box"></div>
<div class="a t" style="left:1167.0px;width:2000px;text-align:center;top:1197.23px;font-size:11.5px;color:#dcdcdc;font-weight:normal;"><span style="display:inline-block;transform:scaleX(0.9);transform-origin:center center">Target</span></div>
<div class="a" style="left:2209.5px;top:1191.5px;width:155.0px;height:30.5px;background:#464646;border:1px solid #181818;box-sizing:border-box"></div>
<div class="a t" style="left:1287.0px;width:2000px;text-align:center;top:1197.23px;font-size:11.5px;color:#dcdcdc;font-weight:normal;"><span style="display:inline-block;transform:scaleX(0.9);transform-origin:center center">Signal Handler</span></div>
<div class="a" style="left:2369.5px;top:1191.5px;width:186.5px;height:30.5px;background:#464646;border:1px solid #181818;box-sizing:border-box"></div>
<div class="a t" style="left:1462.75px;width:2000px;text-align:center;top:1197.23px;font-size:11.5px;color:#dcdcdc;font-weight:normal;"><span style="display:inline-block;transform:scaleX(0.9);transform-origin:center center">Action</span></div>
<div class="a" style="left:1812px;top:244.5px;width:1023px;height:789.5px;border-radius:6px 6px 0 0;box-shadow:0 6px 36px 3px rgba(0,0,0,0.34)"></div>
<svg class="a" style="left:1812px;top:267px;overflow:hidden" width="1023" height="767" viewBox="0 0 1023 767"><defs><linearGradient id="bg3" x1="0" y1="0" x2="0" y2="1"><stop offset="0" stop-color="#9a9a9a"/><stop offset="0.5" stop-color="#606060"/><stop offset="1" stop-color="#262626"/></linearGradient></defs><rect x="0" y="0" width="1023" height="767" fill="url(#bg3)"/><g stroke="#e6e6e6" stroke-width="1" opacity="0.92"><line x1="0" y1="4.5" x2="1023" y2="4.5"/><line x1="0" y1="9.5" x2="1023" y2="9.5"/><line x1="0" y1="15.5" x2="1023" y2="15.5"/><line x1="0" y1="21.5" x2="1023" y2="21.5"/><line x1="0" y1="27.5" x2="1023" y2="27.5"/><line x1="0" y1="34.5" x2="1023" y2="34.5"/><line x1="0" y1="40.5" x2="1023" y2="40.5"/><line x1="0" y1="47.5" x2="1023" y2="47.5"/><line x1="0" y1="55.5" x2="1023" y2="55.5"/><line x1="0" y1="62.5" x2="1023" y2="62.5"/><line x1="0" y1="70.5" x2="1023" y2="70.5"/><line x1="0" y1="78.5" x2="1023" y2="78.5"/><line x1="0" y1="87.5" x2="1023" y2="87.5"/><line x1="0" y1="96.5" x2="1023" y2="96.5"/><line x1="0" y1="106.5" x2="1023" y2="106.5"/><line x1="0" y1="116.5" x2="1023" y2="116.5"/><line x1="0" y1="126.5" x2="1023" y2="126.5"/><line x1="0" y1="137.5" x2="1023" y2="137.5"/><line x1="0" y1="149.5" x2="1023" y2="149.5"/><line x1="0" y1="161.5" x2="1023" y2="161.5"/><line x1="0" y1="174.5" x2="1023" y2="174.5"/><line x1="0" y1="188.5" x2="1023" y2="188.5"/><line x1="0" y1="202.5" x2="1023" y2="202.5"/><line x1="0" y1="217.5" x2="1023" y2="217.5"/><line x1="0" y1="234.5" x2="1023" y2="234.5"/><line x1="0" y1="251.5" x2="1023" y2="251.5"/><line x1="0" y1="270.5" x2="1023" y2="270.5"/><line x1="0" y1="290.5" x2="1023" y2="290.5"/><line x1="0" y1="311.5" x2="1023" y2="311.5"/><line x1="0" y1="334.5" x2="1023" y2="334.5"/><line x1="0" y1="358.5" x2="1023" y2="358.5"/><line x1="0" y1="385.5" x2="1023" y2="385.5"/><line x1="0" y1="414.5" x2="1023" y2="414.5"/><line x1="0" y1="446.5" x2="1023" y2="446.5"/><line x1="0" y1="480.5" x2="1023" y2="480.5"/><line x1="0" y1="518.5" x2="1023" y2="518.5"/><line x1="0" y1="559.5" x2="1023" y2="559.5"/><line x1="0" y1="605.5" x2="1023" y2="605.5"/><line x1="0" y1="656.5" x2="1023" y2="656.5"/><line x1="0" y1="714.5" x2="1023" y2="714.5"/><line x1="-165.7" y1="0" x2="-1967.0" y2="767"/><line x1="-148.7" y1="0" x2="-1905.0" y2="767"/><line x1="-131.8" y1="0" x2="-1843.0" y2="767"/><line x1="-114.8" y1="0" x2="-1781.0" y2="767"/><line x1="-97.8" y1="0" x2="-1719.0" y2="767"/><line x1="-80.9" y1="0" x2="-1657.0" y2="767"/><line x1="-63.9" y1="0" x2="-1595.0" y2="767"/><line x1="-46.9" y1="0" x2="-1533.0" y2="767"/><line x1="-30.0" y1="0" x2="-1471.0" y2="767"/><line x1="-13.0" y1="0" x2="-1409.0" y2="767"/><line x1="4.0" y1="0" x2="-1347.0" y2="767"/><line x1="20.9" y1="0" x2="-1285.0" y2="767"/><line x1="37.9" y1="0" x2="-1223.0" y2="767"/><line x1="54.9" y1="0" x2="-1161.0" y2="767"/><line x1="71.8" y1="0" x2="-1099.0" y2="767"/><line x1="88.8" y1="0" x2="-1037.0" y2="767"/><line x1="105.8" y1="0" x2="-975.0" y2="767"/><line x1="122.7" y1="0" x2="-913.0" y2="767"/><line x1="139.7" y1="0" x2="-851.0" y2="767"/><line x1="156.7" y1="0" x2="-789.0" y2="767"/><line x1="173.6" y1="0" x2="-727.0" y2="767"/><line x1="190.6" y1="0" x2="-665.0" y2="767"/><line x1="207.6" y1="0" x2="-603.0" y2="767"/><line x1="224.5" y1="0" x2="-541.0" y2="767"/><line x1="241.5" y1="0" x2="-479.0" y2="767"/><line x1="258.5" y1="0" x2="-417.0" y2="767"/><line x1="275.5" y1="0" x2="-355.0" y2="767"/><line x1="292.4" y1="0" x2="-293.0" y2="767"/><line x1="309.4" y1="0" x2="-231.0" y2="767"/><line x1="326.4" y1="0" x2="-169.0" y2="767"/><line x1="343.3" y1="0" x2="-107.0" y2="767"/><line x1="360.3" y1="0" x2="-45.0" y2="767"/><line x1="377.3" y1="0" x2="17.0" y2="767"/><line x1="394.2" y1="0" x2="79.0" y2="767"/><line x1="411.2" y1="0" x2="141.0" y2="767"/><line x1="428.2" y1="0" x2="203.0" y2="767"/><line x1="445.1" y1="0" x2="265.0" y2="767"/><line x1="462.1" y1="0" x2="327.0" y2="767"/><line x1="479.1" y1="0" x2="389.0" y2="767"/><line x1="496.0" y1="0" x2="451.0" y2="767"/><line x1="530.0" y1="0" x2="575.0" y2="767"/><line x1="546.9" y1="0" x2="637.0" y2="767"/><line x1="563.9" y1="0" x2="699.0" y2="767"/><line x1="580.9" y1="0" x2="761.0" y2="767"/><line x1="597.8" y1="0" x2="823.0" y2="767"/><line x1="614.8" y1="0" x2="885.0" y2="767"/><line x1="631.8" y1="0" x2="947.0" y2="767"/><line x1="648.7" y1="0" x2="1009.0" y2="767"/><line x1="665.7" y1="0" x2="1071.0" y2="767"/><line x1="682.7" y1="0" x2="1133.0" y2="767"/><line x1="699.6" y1="0" x2="1195.0" y2="767"/><line x1="716.6" y1="0" x2="1257.0" y2="767"/><line x1="733.6" y1="0" x2="1319.0" y2="767"/><line x1="750.5" y1="0" x2="1381.0" y2="767"/><line x1="767.5" y1="0" x2="1443.0" y2="767"/><line x1="784.5" y1="0" x2="1505.0" y2="767"/><line x1="801.5" y1="0" x2="1567.0" y2="767"/><line x1="818.4" y1="0" x2="1629.0" y2="767"/><line x1="835.4" y1="0" x2="1691.0" y2="767"/><line x1="852.4" y1="0" x2="1753.0" y2="767"/><line x1="869.3" y1="0" x2="1815.0" y2="767"/><line x1="886.3" y1="0" x2="1877.0" y2="767"/><line x1="903.3" y1="0" x2="1939.0" y2="767"/><line x1="920.2" y1="0" x2="2001.0" y2="767"/><line x1="937.2" y1="0" x2="2063.0" y2="767"/><line x1="954.2" y1="0" x2="2125.0" y2="767"/><line x1="971.1" y1="0" x2="2187.0" y2="767"/><line x1="988.1" y1="0" x2="2249.0" y2="767"/><line x1="1005.1" y1="0" x2="2311.0" y2="767"/><line x1="1022.0" y1="0" x2="2373.0" y2="767"/><line x1="1039.0" y1="0" x2="2435.0" y2="767"/><line x1="1056.0" y1="0" x2="2497.0" y2="767"/><line x1="1072.9" y1="0" x2="2559.0" y2="767"/><line x1="1089.9" y1="0" x2="2621.0" y2="767"/><line x1="1106.9" y1="0" x2="2683.0" y2="767"/><line x1="1123.8" y1="0" x2="2745.0" y2="767"/><line x1="1140.8" y1="0" x2="2807.0" y2="767"/><line x1="1157.8" y1="0" x2="2869.0" y2="767"/><line x1="1174.7" y1="0" x2="2931.0" y2="767"/><line x1="1191.7" y1="0" x2="2993.0" y2="767"/></g><g stroke="#2a2a2a" stroke-width="0.9" opacity="0.75"><line x1="96" y1="0" x2="185" y2="227"/><line x1="101" y1="0" x2="190" y2="225"/><line x1="187" y1="230" x2="839" y2="230"/><line x1="189" y1="224.5" x2="837" y2="224.5"/><line x1="841" y1="227" x2="930" y2="0"/><line x1="836" y1="225" x2="925" y2="0"/><line x1="205" y1="0" x2="342.1489361702129" y2="293"/><line x1="251" y1="0" x2="367.6656534954409" y2="293"/><line x1="279" y1="0" x2="383.1975683890578" y2="293"/><line x1="773" y1="0" x2="657.2249240121582" y2="293"/><line x1="818" y1="0" x2="682.1869300911853" y2="293"/><line x1="871" y1="0" x2="711.5866261398178" y2="293"/></g><g stroke="#2a2a2a" stroke-width="0.8" opacity="0.3"><line x1="342.1489361702129" y1="293" x2="513" y2="658"/><line x1="367.6656534954409" y1="293" x2="513" y2="658"/><line x1="383.1975683890578" y1="293" x2="513" y2="658"/><line x1="657.2249240121582" y1="293" x2="513" y2="658"/><line x1="682.1869300911853" y1="293" x2="513" y2="658"/><line x1="711.5866261398178" y1="293" x2="513" y2="658"/><line x1="185" y1="227" x2="513" y2="658"/><line x1="841" y1="227" x2="513" y2="658"/><line x1="190" y1="227" x2="594" y2="629"/><line x1="841" y1="227" x2="594" y2="629"/></g><line x1="513.5" y1="0" x2="513.5" y2="767" stroke="#10a8e0" stroke-width="1.3"/><line x1="0" y1="383.5" x2="1023" y2="383.5" stroke="#c42020" stroke-width="1"/><polygon points="508.5,239.5 555.6,248.0 616.0,279.8 567.7,275.7" fill="#050505" stroke="#050505" stroke-width="0.7" stroke-linejoin="round"/><polygon points="508.5,239.5 567.7,275.7 539.5,356.7 480.0,318.0" fill="#931414" stroke="#931414" stroke-width="0.7" stroke-linejoin="round"/><polygon points="567.7,275.7 616.0,279.8 585.0,352.0 539.5,356.7" fill="#a91818" stroke="#a91818" stroke-width="0.7" stroke-linejoin="round"/><polygon points="480.0,318.0 539.5,356.7 507.0,430.0 453.0,387.7" fill="#121a52" stroke="#121a52" stroke-width="0.7" stroke-linejoin="round"/><polygon points="539.5,356.7 585.0,352.0 553.6,420.0 507.0,430.0" fill="#141e60" stroke="#141e60" stroke-width="0.7" stroke-linejoin="round"/></svg>
<svg class="a" style="left:2298.6px;top:624.7px;" width="52" height="52" viewBox="0 0 52 52"><defs><radialGradient id="sg" cx="0.4" cy="0.35" r="0.7"><stop offset="0" stop-color="#ffffff"/><stop offset="1" stop-color="#a8a8a8"/></radialGradient></defs><line x1="39.5" y1="26.0" x2="48.5" y2="26.0" stroke="#e6e6e6" stroke-width="2.6" stroke-linecap="round"/><line x1="35.5" y1="35.5" x2="41.9" y2="41.9" stroke="#e6e6e6" stroke-width="2.6" stroke-linecap="round"/><line x1="26.0" y1="39.5" x2="26.0" y2="48.5" stroke="#e6e6e6" stroke-width="2.6" stroke-linecap="round"/><line x1="16.5" y1="35.5" x2="10.1" y2="41.9" stroke="#e6e6e6" stroke-width="2.6" stroke-linecap="round"/><line x1="12.5" y1="26.0" x2="3.5" y2="26.0" stroke="#e6e6e6" stroke-width="2.6" stroke-linecap="round"/><line x1="16.5" y1="16.5" x2="10.1" y2="10.1" stroke="#e6e6e6" stroke-width="2.6" stroke-linecap="round"/><line x1="26.0" y1="12.5" x2="26.0" y2="3.5" stroke="#e6e6e6" stroke-width="2.6" stroke-linecap="round"/><line x1="35.5" y1="16.5" x2="41.9" y2="10.1" stroke="#e6e6e6" stroke-width="2.6" stroke-linecap="round"/><circle cx="26" cy="26" r="11" fill="url(#sg)"/></svg>
<svg class="a" style="left:2514px;top:624.7px;" width="52" height="52" viewBox="0 0 52 52"><defs><radialGradient id="sg" cx="0.4" cy="0.35" r="0.7"><stop offset="0" stop-color="#ffffff"/><stop offset="1" stop-color="#a8a8a8"/></radialGradient></defs><line x1="39.5" y1="26.0" x2="48.5" y2="26.0" stroke="#e6e6e6" stroke-width="2.6" stroke-linecap="round"/><line x1="35.5" y1="35.5" x2="41.9" y2="41.9" stroke="#e6e6e6" stroke-width="2.6" stroke-linecap="round"/><line x1="26.0" y1="39.5" x2="26.0" y2="48.5" stroke="#e6e6e6" stroke-width="2.6" stroke-linecap="round"/><line x1="16.5" y1="35.5" x2="10.1" y2="41.9" stroke="#e6e6e6" stroke-width="2.6" stroke-linecap="round"/><line x1="12.5" y1="26.0" x2="3.5" y2="26.0" stroke="#e6e6e6" stroke-width="2.6" stroke-linecap="round"/><line x1="16.5" y1="16.5" x2="10.1" y2="10.1" stroke="#e6e6e6" stroke-width="2.6" stroke-linecap="round"/><line x1="26.0" y1="12.5" x2="26.0" y2="3.5" stroke="#e6e6e6" stroke-width="2.6" stroke-linecap="round"/><line x1="35.5" y1="16.5" x2="41.9" y2="10.1" stroke="#e6e6e6" stroke-width="2.6" stroke-linecap="round"/><circle cx="26" cy="26" r="11" fill="url(#sg)"/></svg>
<svg class="a" style="left:2302px;top:785.6px;" width="46" height="40" viewBox="0 0 46 40"><rect x="1" y="17" width="28" height="17" fill="#9aa7ee"/><path d="M29 20.5 L45 12.7 L45 38.4 L29 30.5 Z" fill="#9aa7ee"/><circle cx="7.4" cy="12" r="3.8" fill="none" stroke="#9aa7ee" stroke-width="2"/><circle cx="20.4" cy="9" r="7.1" fill="none" stroke="#9aa7ee" stroke-width="2.1"/></svg>
<svg class="a" style="left:2302px;top:908.5px;" width="46" height="40" viewBox="0 0 46 40"><rect x="1" y="17" width="28" height="17" fill="#9aa7ee"/><path d="M29 20.5 L45 12.7 L45 38.4 L29 30.5 Z" fill="#9aa7ee"/><circle cx="7.4" cy="12" r="3.8" fill="none" stroke="#9aa7ee" stroke-width="2"/><circle cx="20.4" cy="9" r="7.1" fill="none" stroke="#9aa7ee" stroke-width="2.1"/></svg>
<svg class="a" style="left:2384px;top:874.8px;" width="46" height="40" viewBox="0 0 46 40"><rect x="1" y="17" width="28" height="17" fill="#9aa7ee"/><path d="M29 20.5 L45 12.7 L45 38.4 L29 30.5 Z" fill="#9aa7ee"/><circle cx="7.4" cy="12" r="3.8" fill="none" stroke="#9aa7ee" stroke-width="2"/><circle cx="20.4" cy="9" r="7.1" fill="none" stroke="#9aa7ee" stroke-width="2.1"/></svg>
<div class="a" style="left:1812px;top:1033px;width:1023px;height:1.5px;background:#0e0e0e"></div>
<div class="a" style="left:1812px;top:267px;width:1px;height:767px;background:rgba(120,120,120,0.5)"></div>
<div class="a" style="left:1812px;top:244.5px;width:1023px;height:22.5px;border-radius:6px 6px 0 0;background:linear-gradient(#555555,#434343);border-bottom:1px solid #1a1a1a;box-sizing:border-box"></div>
<div class="a" style="left:1821px;top:250px;width:12px;height:12px;border-radius:6px;background:#ee5a52"></div>
<div class="a" style="left:1841px;top:250px;width:12px;height:12px;border-radius:6px;background:#f4bd4c"></div>
<div class="a" style="left:1861px;top:250px;width:12px;height:12px;border-radius:6px;background:#5cc64e"></div>
<div class="a t" style="left:1324.6px;width:2000px;text-align:center;top:246.27px;font-size:13.5px;color:#d9d9d9;font-weight:normal;">3D Edit View</div>
<div class="a" style="left:1813px;top:267px;width:34.5px;height:220.5px;background:rgba(34,34,34,0.82)"></div>
<div class="a" style="left:1817px;top:272px;width:28px;height:28px;background:#151515;border-radius:2px"></div>
<svg class="a" style="left:1821px;top:275px;" width="20" height="22" viewBox="0 0 20 22"><path d="M2.7 2.9 L17 14.5 L9.3 15.3 L5.8 20.7 Z" fill="#1c9ad8"/></svg>
<svg class="a" style="left:1825px;top:312px;" width="16" height="18" viewBox="0 0 16 18"><path d="M1.5 1.5 L13.5 9 L8 10 L5 16.5 Z" fill="none" stroke="#e8e8e8" stroke-width="1.1" stroke-linejoin="round"/></svg>
<div class="a" style="left:1818px;top:339.5px;width:25px;height:1px;background:#dddddd"></div>
<div class="a" style="left:1817px;top:346.5px;width:28px;height:28.5px;background:#151515;border-radius:2px"></div>
<svg class="a" style="left:1822px;top:352px;" width="18" height="18" viewBox="0 0 18 18"><path d="M9 2 V16 M2 9 H16" stroke="#1c9ad8" stroke-width="1.2"/><path d="M9 0 L6.5 3 H11.5Z M9 18 L6.5 15 H11.5Z M0 9 L3 6.5 V11.5Z M18 9 L15 6.5 V11.5Z" fill="#1c9ad8"/></svg>
<svg class="a" style="left:1821px;top:385px;" width="20" height="20" viewBox="0 0 20 20"><path d="M16 11 A7 7 0 1 1 14.5 5" fill="none" stroke="#e8e8e8" stroke-width="1.2"/><path d="M14 10.5 L18 10.5 L16 14 Z" fill="#e8e8e8"/><circle cx="9" cy="10" r="1" fill="#e8e8e8"/></svg>
<svg class="a" style="left:1822px;top:420px;" width="18" height="18" viewBox="0 0 18 18"><rect x="1" y="1" width="15" height="15" fill="none" stroke="#e8e8e8" stroke-width="1" stroke-dasharray="2 1.5"/><rect x="1" y="8" width="8" height="9" fill="#f2f2f2"/><path d="M11 6 L15 2" stroke="#e8e8e8" stroke-width="1"/></svg>
<div class="a" style="left:1818px;top:448px;width:25px;height:1px;background:#dddddd"></div>
<svg class="a" style="left:1821px;top:459px;" width="20" height="20" viewBox="0 0 20 20"><circle cx="10" cy="10" r="2.8" fill="#ffffff"/><path d="M1 1 L8 3 L3 8 Z M19 1 L12 3 L17 8 Z M1 19 L8 17 L3 12 Z M19 19 L12 17 L17 12 Z" fill="#ffffff"/></svg>
<div class="a" style="left:2447px;top:267px;width:290px;height:33.5px;background:rgba(40,40,40,0.8)"></div>
<svg class="a" style="left:2450px;top:276px;" width="16" height="17" viewBox="0 0 16 17"><path d="M1 4 L10 1 L15 4 L13 14 L6 16 L2 11 Z M1 4 L6 7 L15 4 M6 7 L6 16" fill="none" stroke="#d8d8d8" stroke-width="1.1"/></svg>
<div class="a t" style="left:2476px;top:274.77px;font-size:13.5px;color:#dedede;font-weight:normal;"><span style="display:inline-block;transform:scaleX(0.98);transform-origin:left center">Perspective</span></div>
<svg class="a" style="left:2560px;top:275px;" width="16" height="18" viewBox="0 0 16 18"><path d="M8 9 L3 3 M8 9 L14 6 M8 9 L6 16" stroke="#d0d0d0" stroke-width="1.6"/><circle cx="3" cy="3" r="2" fill="#d0d0d0"/><circle cx="14" cy="6" r="2" fill="#d0d0d0"/><circle cx="6" cy="16" r="2" fill="#d0d0d0"/></svg>
<div class="a t" style="left:2581px;top:274.77px;font-size:13.5px;color:#dedede;font-weight:normal;"><span style="display:inline-block;transform:scaleX(0.98);transform-origin:left center">Local</span></div>
<svg class="a" style="left:2627px;top:276px;" width="11" height="17" viewBox="0 0 11 17"><path d="M5.5 1 A4.3 4.3 0 0 1 8.5 8.5 L7.5 11 H3.5 L2.5 8.5 A4.3 4.3 0 0 1 5.5 1Z" fill="none" stroke="#d0d0d0" stroke-width="1.1"/><path d="M4 13 H7 M4.5 15 H6.5" stroke="#d0d0d0" stroke-width="1.1"/></svg>
<div class="a t" style="left:2645px;top:274.77px;font-size:13.5px;color:#dedede;font-weight:normal;"><span style="display:inline-block;transform:scaleX(0.98);transform-origin:left center">Edit Light Off</span></div>
<svg class="a" style="left:2752px;top:280px;" width="85" height="60" viewBox="0 0 85 60"><path d="M35 10 V32" stroke="#0c8a0c" stroke-width="2.5"/><path d="M31.5 4 Q35 0 38.5 4 L38 18 L32 18 Z" fill="#0c8a0c"/><circle cx="11" cy="37" r="5" fill="#ff0000"/><path d="M40 37 H60" stroke="#ff0000" stroke-width="2"/><path d="M58 34.5 H76 Q81 37 76 39.5 H58Z" fill="#ff0000"/><circle cx="35" cy="54" r="5" fill="#0000ff"/></svg>
<div class="a t" style="left:1813px;top:1017.77px;font-size:13.6px;color:#f2f2f2;font-weight:normal;">Camera controls: Option + mouse press and drag. Left: Rotate, Middle: Pan, Right/Wheel: Zoom.</div>
</body></html>
